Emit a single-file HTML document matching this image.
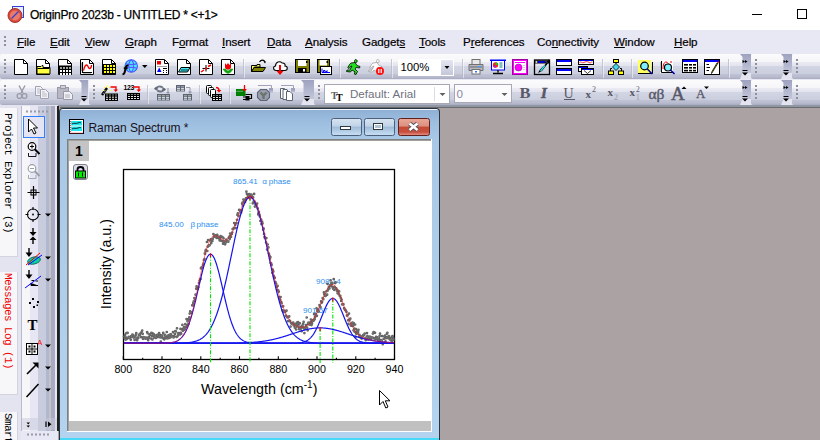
<!DOCTYPE html>
<html><head><meta charset="utf-8">
<style>
*{box-sizing:border-box}
html,body{margin:0;padding:0;width:820px;height:440px;overflow:hidden;background:#aba3a3;font-family:"Liberation Sans",sans-serif;position:relative}
.abs{position:absolute}
#title{left:0;top:0;width:820px;height:30px;background:#fff}
#title .t{left:30px;top:8px;font-size:12px;color:#000;letter-spacing:-0.25px;white-space:nowrap;-webkit-text-stroke:0.25px #000}
#menu{left:0;top:30px;width:820px;height:24px;background:#e8e7f4}
#menu span{position:absolute;top:5px;font-size:11.6px;letter-spacing:-0.1px;color:#000;white-space:nowrap;-webkit-text-stroke:0.2px #000}
#menu u{text-decoration:underline;text-decoration-thickness:1px;text-underline-offset:0.5px}
#tbarea{left:0;top:54px;width:820px;height:53px;background:#e8e7f4}
.tb{position:absolute;border-radius:2px;background:linear-gradient(#fbfbfc 0,#f6f6f9 7.5px,#eaeaf3 8.5px,#e4e4ef 11.5px,#d2d5e3 12.5px,#cbcedd 19.5px,#bfc2d4 20.5px,#b8bbce 23px,#a8abbf 25px)}
.chev{position:absolute;border-radius:3px 3px 3px 3px;background:linear-gradient(#9da2be 0,#a8acc6 3px,#b4b8cf 9px,#c4c7d9 15px,#d6d8e6 19px,#e6e7f1 23px,#dcdde8 25px)}
.grip{position:absolute;width:2px;background:repeating-linear-gradient(#8e8e9c 0 2px,transparent 2px 4px)}
#mdiline{left:58px;top:105px;width:762px;height:3px;background:linear-gradient(#8f97a2 0,#8f97a2 2px,#6c6c70 2px)}
.vt{transform-origin:0 0;transform:rotate(90deg);font-family:"Liberation Mono",monospace;font-size:11px;letter-spacing:-0.6px;white-space:nowrap;line-height:11px}
.tl{top:363px;width:30px;text-align:center;font-size:10.7px;color:#000;line-height:12px}
.pl{font-size:8.1px;color:#2d8ff0;white-space:nowrap;line-height:10px}
</style></head><body>

<div id="title" class="abs">
 <svg class="abs" style="left:6px;top:5px" width="20" height="20" viewBox="0 0 20 20">
  <rect x="6.5" y="1.5" width="11" height="11" fill="#e8eeff" stroke="#3340d0" stroke-width="1"/>
  <circle cx="9" cy="10.5" r="7" fill="#d84a3c" stroke="#a8342a" stroke-width="1"/>
  <circle cx="9" cy="10.5" r="5" fill="#ea7a6a"/>
  <path d="M5.5 13.5 L12.5 6.5" stroke="#3340d0" stroke-width="1.2"/>
 </svg>
 <div class="abs t">OriginPro 2023b - UNTITLED * &lt;+1&gt;</div>
 <div class="abs" style="left:752px;top:14px;width:10px;height:1px;background:#000"></div>
 <div class="abs" style="left:797px;top:9px;width:10px;height:10px;border:1px solid #000"></div>
</div>
<div id="menu" class="abs">
<div class="abs grip" style="left:4px;top:6px;height:12px"></div>
<span style="left:17px"><u>F</u>ile</span>
<span style="left:50px"><u>E</u>dit</span>
<span style="left:85px"><u>V</u>iew</span>
<span style="left:125px"><u>G</u>raph</span>
<span style="left:172px">F<u>o</u>rmat</span>
<span style="left:222px"><u>I</u>nsert</span>
<span style="left:267px"><u>D</u>ata</span>
<span style="left:305px"><u>A</u>nalysis</span>
<span style="left:362px">Gadget<u>s</u></span>
<span style="left:419px"><u>T</u>ools</span>
<span style="left:463px">P<u>r</u>eferences</span>
<span style="left:537px">Co<u>n</u>nectivity</span>
<span style="left:614px"><u>W</u>indow</span>
<span style="left:674px"><u>H</u>elp</span>
</div>
<div id="tbarea" class="abs"></div>
<div class="tb" style="left:0px;top:54px;width:751px;height:25px"></div><div class="abs grip" style="left:4px;top:59px;height:15px"></div><svg class="abs" style="left:739px;top:54px" width="14" height="25" viewBox="739 54 14 25"><defs><linearGradient id="cv74054" x1="0" y1="0" x2="0" y2="1"><stop offset="0" stop-color="#9ea2c0"/><stop offset="0.5" stop-color="#b0b4cc"/><stop offset="1" stop-color="#c4c7da"/></linearGradient></defs><path d="M740 54H751V73H742.5V57Z" fill="url(#cv74054)"/><path d="M742.5 73H751L752.5 79H740Z" fill="#e4e4f0"/></svg>
<div class="tb" style="left:751px;top:54px;width:41px;height:25px"></div><div class="abs grip" style="left:755px;top:59px;height:15px"></div><svg class="abs" style="left:780px;top:54px" width="14" height="25" viewBox="780 54 14 25"><defs><linearGradient id="cv78154" x1="0" y1="0" x2="0" y2="1"><stop offset="0" stop-color="#9ea2c0"/><stop offset="0.5" stop-color="#b0b4cc"/><stop offset="1" stop-color="#c4c7da"/></linearGradient></defs><path d="M781 54H792V73H783.5V57Z" fill="url(#cv78154)"/><path d="M783.5 73H792L793.5 79H781Z" fill="#e4e4f0"/></svg>
<div class="tb" style="left:792px;top:54px;width:38px;height:25px"></div><div class="abs grip" style="left:796px;top:59px;height:15px"></div>
<div class="tb" style="left:0px;top:80px;width:88px;height:25px"></div><div class="abs grip" style="left:4px;top:85px;height:15px"></div><svg class="abs" style="left:78px;top:80px" width="12" height="25" viewBox="78 80 12 25"><defs><linearGradient id="cv7980" x1="0" y1="0" x2="0" y2="1"><stop offset="0" stop-color="#9ea2c0"/><stop offset="0.5" stop-color="#b0b4cc"/><stop offset="1" stop-color="#c4c7da"/></linearGradient></defs><path d="M79 80H88V99H81.5V83Z" fill="url(#cv7980)"/><path d="M81.5 99H88L89.5 105H79Z" fill="#e4e4f0"/></svg>
<div class="tb" style="left:89px;top:80px;width:225px;height:25px"></div><div class="abs grip" style="left:93px;top:85px;height:15px"></div><svg class="abs" style="left:300px;top:80px" width="16" height="25" viewBox="300 80 16 25"><defs><linearGradient id="cv30180" x1="0" y1="0" x2="0" y2="1"><stop offset="0" stop-color="#9ea2c0"/><stop offset="0.5" stop-color="#b0b4cc"/><stop offset="1" stop-color="#c4c7da"/></linearGradient></defs><path d="M301 80H314V99H303.5V83Z" fill="url(#cv30180)"/><path d="M303.5 99H314L315.5 105H301Z" fill="#e4e4f0"/></svg>
<div class="tb" style="left:314px;top:80px;width:437px;height:25px"></div><div class="abs grip" style="left:318px;top:85px;height:15px"></div><svg class="abs" style="left:739px;top:80px" width="14" height="25" viewBox="739 80 14 25"><defs><linearGradient id="cv74080" x1="0" y1="0" x2="0" y2="1"><stop offset="0" stop-color="#9ea2c0"/><stop offset="0.5" stop-color="#b0b4cc"/><stop offset="1" stop-color="#c4c7da"/></linearGradient></defs><path d="M740 80H751V99H742.5V83Z" fill="url(#cv74080)"/><path d="M742.5 99H751L752.5 105H740Z" fill="#e4e4f0"/></svg>
<div class="tb" style="left:751px;top:80px;width:41px;height:25px"></div><div class="abs grip" style="left:755px;top:85px;height:15px"></div><svg class="abs" style="left:780px;top:80px" width="14" height="25" viewBox="780 80 14 25"><defs><linearGradient id="cv78180" x1="0" y1="0" x2="0" y2="1"><stop offset="0" stop-color="#9ea2c0"/><stop offset="0.5" stop-color="#b0b4cc"/><stop offset="1" stop-color="#c4c7da"/></linearGradient></defs><path d="M781 80H792V99H783.5V83Z" fill="url(#cv78180)"/><path d="M783.5 99H792L793.5 105H781Z" fill="#e4e4f0"/></svg>
<div class="tb" style="left:792px;top:80px;width:38px;height:25px"></div><div class="abs grip" style="left:796px;top:85px;height:15px"></div>
<div id="mdiline" class="abs"></div>
<!-- left panels -->
<div class="abs" style="left:0;top:105px;width:58px;height:335px;background:#e4e4f0"></div>
<div class="abs" style="left:0;top:108px;width:18px;height:149px;background:#f7f7fa;border-right:1px solid #d4d4de;border-bottom:1px solid #d4d4de"></div>
<div class="abs" style="left:0;top:272px;width:18px;height:123px;background:#f7f7fa;border-right:1px solid #d4d4de;border-bottom:1px solid #d4d4de"></div>
<div class="abs" style="left:0;top:412px;width:18px;height:28px;background:#f7f7fa;border-right:1px solid #d4d4de"></div>
<div class="abs vt" style="left:13px;top:113px;color:#000">Project Explorer (3)</div>
<div class="abs vt" style="left:13px;top:273px;color:#f00000">Messages Log (1)</div>
<div class="abs vt" style="left:13px;top:413px;color:#000">Smart</div>
<!-- left toolbar -->
<div class="abs" style="left:21px;top:106px;width:39px;height:325px;background:linear-gradient(90deg,#b8b8d0 0,#b8b8d0 1px,#f6f6f8 1px,#f6f6f8 9px,#e6e6f4 9px,#e6e6f4 17px,#c8ccdc 17px,#c8ccdc 25px,#b0b8d0 25px,#b0b8d0 28px,#c4c4c8 28px,#c4c4c8 30px,#aaaac4 30px,#aaaac4 34.5px,#e8e8f0 34.5px,#e8e8f0 36.5px,#202020 36.5px,#202020 38.5px,#aba3a3 38.5px)"></div>
<div class="abs" style="left:21px;top:431px;width:37px;height:9px;background:#e8e7f4"></div>
<!-- graph window -->
<div class="abs" style="left:59px;top:108px;width:381px;height:336px;border-radius:4px 4px 0 0;background:#2a3440"></div>
<div class="abs" style="left:60px;top:109px;width:379px;height:335px;border-radius:3px 3px 0 0;background:linear-gradient(#f4f8fc 0,#f4f8fc 1px,#8fb1d5 1px,#9ebfe0 14px,#a8c8e6 30px,#b0cfea 60%,#b4d3ee 100%)"></div>
<div class="abs" style="left:60px;top:438px;width:379px;height:2px;background:#48d8f8"></div>
<div class="abs" style="left:67px;top:139px;width:365px;height:293px;background:#808080"></div><div class="abs" style="left:68px;top:140px;width:364px;height:292px;background:#a0a0a0"></div>
<div class="abs" style="left:69px;top:141px;width:363px;height:291px;background:#fff"></div>
<div class="abs" style="left:69px;top:421px;width:362px;height:10px;background:#c0c0c0"></div>
<div class="abs" style="left:67px;top:431px;width:365px;height:1px;background:#fff"></div>
<div class="abs" style="left:431px;top:139px;width:1px;height:293px;background:#fff"></div>
<div class="abs" style="left:69px;top:141px;width:20px;height:20px;background:#c4c4c4;font-size:14px;font-weight:bold;text-align:center;line-height:21px;color:#000">1</div>
<div class="abs" style="left:88.5px;top:121px;font-size:12px;letter-spacing:-0.1px;color:#1a1020;white-space:nowrap">Raman Spectrum *</div>
<svg class="abs" style="left:0;top:0" width="820" height="440" viewBox="0 0 820 440">
 <defs>
  <linearGradient id="bg1" x1="0" y1="0" x2="0" y2="1"><stop offset="0" stop-color="#d8e4f0"/><stop offset="0.45" stop-color="#c0d4e8"/><stop offset="0.5" stop-color="#9fbcd8"/><stop offset="1" stop-color="#c8e0f4"/></linearGradient>
  <linearGradient id="bg2" x1="0" y1="0" x2="0" y2="1"><stop offset="0" stop-color="#eaa898"/><stop offset="0.45" stop-color="#dc9080"/><stop offset="0.5" stop-color="#c44a34"/><stop offset="0.8" stop-color="#c85040"/><stop offset="1" stop-color="#e89888"/></linearGradient>
 </defs>
 <rect x="69.5" y="119.5" width="14" height="14" fill="#fff" stroke="#000"/>
 <rect x="71" y="121" width="11" height="4.5" fill="#20e8f0"/><rect x="71" y="126.5" width="11" height="4.5" fill="#20e8f0"/>
 <path d="M72 124C74 122.5 76 124 78 123S80 123 81 122.5M72 129C74 127.5 76 129 78 128S80 128 81 127.5" stroke="#000" stroke-width="0.8" fill="none"/>
 <path d="M70.5 121V133M70.5 133H83" stroke="#f04040" stroke-dasharray="1,1" stroke-width="1"/>
 <rect x="331.5" y="118.5" width="30" height="17" rx="2" fill="url(#bg1)" stroke="#4c607c"/>
 <rect x="364.5" y="118.5" width="30" height="17" rx="2" fill="url(#bg1)" stroke="#4c607c"/>
 <rect x="398.5" y="118.5" width="31" height="17" rx="2" fill="url(#bg2)" stroke="#602020"/>
 <rect x="340.5" y="126.5" width="10" height="3" fill="#fff" stroke="#303840"/>
 <rect x="373.5" y="123.5" width="9" height="6" fill="#fff" stroke="#303840"/><rect x="375" y="125" width="6" height="3" fill="#b0c4d8"/>
 <path d="M409.5 123.5L417.5 130M417.5 123.5L409.5 130" stroke="#505058" stroke-width="4.2"/>
 <path d="M409.5 123.5L417.5 130M417.5 123.5L409.5 130" stroke="#fff" stroke-width="2.6"/>
 <rect x="73.5" y="164.5" width="14" height="15" rx="2.5" fill="#dcdcec" stroke="#808088"/>
 <path d="M77.5 171.5V169.5C77.5 167.7 78.5 167 80.5 167S83.5 167.7 83.5 169.5V171.5" fill="none" stroke="#000" stroke-width="1.8"/>
 <rect x="75.5" y="171" width="10" height="7" fill="#00f000" stroke="#000"/>
 <path d="M78.5 172.5V176.5M82.5 172.5V176.5" stroke="#000" stroke-width="1"/>
</svg>

<svg class="abs" style="left:0;top:0" width="820" height="440" viewBox="0 0 820 440">
<rect x="123.5" y="169.5" width="271" height="190" fill="none" stroke="#000" stroke-width="1.3"/>
<path d="M123.3 359.5 V356.3 M142.7 359.5 V357.7 M162.0 359.5 V356.3 M181.4 359.5 V357.7 M200.8 359.5 V356.3 M220.2 359.5 V357.7 M239.5 359.5 V356.3 M258.9 359.5 V357.7 M278.3 359.5 V356.3 M297.6 359.5 V357.7 M317.0 359.5 V356.3 M336.4 359.5 V357.7 M355.8 359.5 V356.3 M375.1 359.5 V357.7 M394.5 359.5 V356.3" stroke="#000" stroke-width="1.1"/>
</svg>
<div class="abs tl" style="left:108.3px">800</div>
<div class="abs tl" style="left:147.0px">820</div>
<div class="abs tl" style="left:185.8px">840</div>
<div class="abs tl" style="left:224.5px">860</div>
<div class="abs tl" style="left:263.3px">880</div>
<div class="abs tl" style="left:302.0px">900</div>
<div class="abs tl" style="left:340.8px">920</div>
<div class="abs tl" style="left:379.5px">940</div>
<div class="abs" style="left:201px;top:380.5px;font-size:14.3px;white-space:nowrap;color:#000">Wavelength (cm<sup style="font-size:10px;vertical-align:0;position:relative;top:-5.5px">-1</sup>)</div>
<div class="abs" style="left:98.5px;top:308.5px;transform-origin:0 0;transform:rotate(-90deg);font-size:14.2px;white-space:nowrap;color:#000;line-height:15px">Intensity (a.u.)</div>
<div class="abs pl" style="left:233px;top:177px">865.41 &nbsp;&alpha;<span style="letter-spacing:-0.5px"> </span>phase</div>
<div class="abs pl" style="left:159px;top:220px">845.00 &nbsp; &beta;<span style="letter-spacing:-1px"> </span>phase</div>
<div class="abs pl" style="left:316px;top:277px">908.14</div>
<div class="abs pl" style="left:303px;top:306px">901.57</div>
<svg class="abs" style="left:378px;top:389px" width="16" height="22" viewBox="0 0 16 22"><path d="M1.5 1.5 L1.5 16 L5 12.5 L7.8 19 L10 18 L7.3 11.8 L12 11.8 Z" fill="#fff" stroke="#000" stroke-width="1" stroke-linejoin="round"/></svg>
<svg class="abs" style="left:0;top:0" width="820" height="440" viewBox="0 0 820 440">
<path d="M124.0 336.6h0M124.6 338.4h0M124.9 334.9h0M125.2 336.6h0M125.7 339.6h0M126.0 337.7h0M126.4 333.1h0M126.7 339.1h0M127.1 333.0h0M127.6 332.9h0M128.1 337.8h0M128.8 336.9h0M129.2 337.7h0M129.6 337.9h0M130.2 338.3h0M130.8 339.8h0M131.2 336.1h0M131.5 336.6h0M131.9 335.8h0M132.4 334.6h0M132.9 334.9h0M133.5 337.4h0M134.1 336.9h0M134.6 339.9h0M135.2 336.5h0M135.9 334.8h0M136.3 333.2h0M136.6 338.7h0M137.1 340.2h0M137.7 337.6h0M138.3 338.1h0M138.9 335.2h0M139.4 334.3h0M140.0 335.3h0M140.7 333.1h0M141.0 337.1h0M141.6 332.0h0M142.2 330.5h0M142.7 333.8h0M143.0 338.8h0M143.4 337.1h0M143.8 337.5h0M144.4 337.7h0M144.8 337.7h0M145.5 338.7h0M146.0 337.7h0M146.7 338.4h0M147.1 332.0h0M147.5 333.2h0M148.2 340.2h0M148.6 337.1h0M149.0 337.8h0M149.5 334.7h0M149.8 335.3h0M150.2 334.1h0M150.9 338.5h0M151.5 332.9h0M152.1 335.9h0M152.4 339.5h0M153.0 333.7h0M153.7 334.2h0M154.0 337.6h0M154.5 336.9h0M154.9 336.4h0M155.3 335.6h0M155.6 336.7h0M156.0 337.9h0M156.3 337.4h0M156.9 335.0h0M157.3 335.1h0M157.8 335.2h0M158.4 336.9h0M159.1 333.2h0M159.4 336.5h0M159.8 334.9h0M160.4 337.4h0M160.8 341.7h0M161.3 336.7h0M161.6 335.3h0M162.1 335.6h0M162.8 338.2h0M163.2 332.9h0M163.7 337.8h0M164.2 339.3h0M164.8 334.8h0M165.4 337.1h0M166.1 338.2h0M166.8 332.0h0M167.4 335.9h0M167.8 338.3h0M168.1 337.3h0M168.5 335.7h0M169.1 337.8h0M169.8 334.5h0M170.5 337.3h0M170.8 334.4h0M171.2 335.5h0M171.8 336.4h0M172.4 336.2h0M173.0 332.2h0M173.6 337.4h0M174.3 336.0h0M174.9 334.0h0M175.3 331.1h0M175.9 331.4h0M176.6 337.0h0M177.0 328.3h0M177.6 336.1h0M178.0 333.4h0M178.7 333.0h0M179.3 334.3h0M180.0 334.5h0M180.5 328.9h0M180.9 332.9h0M181.2 333.7h0M181.7 329.3h0M182.4 324.9h0M183.0 330.7h0M183.4 328.3h0M183.8 329.9h0M184.3 327.1h0M184.7 329.2h0M185.3 324.2h0M185.9 327.0h0M186.5 319.1h0M187.0 325.4h0M187.5 321.3h0M188.0 320.7h0M188.4 324.2h0M188.8 319.1h0M189.3 317.3h0M189.7 313.6h0M190.2 311.3h0M190.5 312.8h0M191.1 312.7h0M191.7 312.7h0M192.2 305.3h0M192.8 305.3h0M193.3 302.9h0M193.8 301.3h0M194.4 298.1h0M194.9 299.9h0M195.6 294.7h0M196.2 288.7h0M196.6 286.3h0M197.3 286.8h0M197.6 289.2h0M198.0 287.7h0M198.4 287.3h0M199.0 282.9h0M199.6 280.5h0M200.2 279.0h0M200.6 278.9h0M200.9 268.3h0M201.6 267.3h0M202.3 268.1h0M203.0 265.0h0M203.5 263.5h0M203.9 260.2h0M204.5 259.0h0M204.8 253.4h0M205.1 253.8h0M205.5 250.9h0M205.9 249.8h0M206.6 250.9h0M206.9 242.0h0M207.3 251.0h0M207.7 246.7h0M208.1 240.1h0M208.7 245.6h0M209.1 245.3h0M209.6 245.3h0M210.2 240.5h0M210.8 239.3h0M211.2 243.2h0M211.8 239.9h0M212.4 240.9h0M212.7 238.9h0M213.4 234.0h0M213.9 236.5h0M214.6 235.5h0M215.1 236.9h0M215.5 236.8h0M215.8 236.6h0M216.2 235.1h0M216.8 238.0h0M217.2 234.8h0M217.6 236.5h0M218.0 236.7h0M218.5 237.5h0M219.1 238.4h0M219.7 240.4h0M220.1 239.2h0M220.6 236.2h0M221.2 236.7h0M221.8 241.0h0M222.5 237.2h0M223.1 243.7h0M223.6 238.3h0M223.9 241.4h0M224.3 243.8h0M224.7 242.0h0M225.1 244.3h0M225.7 242.5h0M226.3 239.7h0M226.7 241.6h0M227.2 241.0h0M227.6 241.5h0M228.3 241.7h0M228.7 237.8h0M229.4 236.6h0M229.7 239.1h0M230.1 233.6h0M230.5 236.2h0M231.0 236.8h0M231.3 234.3h0M231.8 233.9h0M232.2 232.6h0M232.6 229.1h0M233.2 228.8h0M233.8 227.9h0M234.2 223.0h0M234.7 228.1h0M235.2 225.0h0M235.8 228.0h0M236.5 223.1h0M237.0 219.8h0M237.4 214.9h0M237.9 213.3h0M238.5 215.9h0M239.1 209.9h0M239.7 210.1h0M240.3 211.2h0M240.6 210.7h0M241.1 212.6h0M241.6 210.4h0M242.1 203.7h0M242.6 202.5h0M242.9 205.6h0M243.4 199.5h0M244.0 201.8h0M244.6 200.3h0M245.0 202.1h0M245.5 200.3h0M245.9 198.4h0M246.4 191.7h0M246.9 194.0h0M247.5 197.5h0M248.0 196.0h0M248.4 195.7h0M248.8 196.1h0M249.3 194.0h0M249.6 197.8h0M250.2 196.7h0M250.8 195.3h0M251.3 194.7h0M251.8 195.6h0M252.4 197.6h0M252.8 203.3h0M253.1 197.4h0M253.6 201.5h0M254.1 193.9h0M254.5 201.7h0M254.9 206.6h0M255.4 203.9h0M256.1 205.9h0M256.4 205.7h0M257.1 203.6h0M257.7 208.4h0M258.2 214.4h0M258.5 213.1h0M258.9 211.9h0M259.4 214.6h0M259.8 216.4h0M260.4 221.0h0M261.1 219.5h0M261.4 224.1h0M262.1 221.7h0M262.5 223.4h0M263.2 229.7h0M263.7 228.6h0M264.1 234.0h0M264.5 237.1h0M264.9 238.0h0M265.5 238.3h0M266.1 242.5h0M266.4 238.1h0M267.1 249.6h0M267.7 244.5h0M268.4 247.4h0M268.9 253.5h0M269.5 255.6h0M270.0 258.6h0M270.4 257.0h0M270.7 263.0h0M271.2 263.5h0M271.6 264.9h0M272.3 272.8h0M272.7 269.7h0M273.3 271.4h0M273.7 275.8h0M274.1 277.9h0M274.8 277.7h0M275.4 282.1h0M276.1 283.5h0M276.5 286.6h0M276.8 286.9h0M277.2 289.9h0M277.6 285.9h0M278.2 290.4h0M278.7 291.7h0M279.1 297.2h0M279.6 298.9h0M280.3 300.0h0M280.6 297.0h0M281.3 302.2h0M281.6 303.2h0M282.1 306.5h0M282.6 310.4h0M283.2 306.3h0M283.5 312.1h0M284.2 310.8h0M284.7 311.1h0M285.1 312.1h0M285.8 315.7h0M286.5 310.7h0M286.9 316.7h0M287.4 317.4h0M288.0 321.1h0M288.5 317.0h0M289.2 316.4h0M289.5 320.6h0M290.1 321.2h0M290.6 326.6h0M291.1 323.0h0M291.6 323.7h0M292.2 323.7h0M292.7 324.1h0M293.2 322.7h0M293.8 325.5h0M294.1 323.8h0M294.8 327.6h0M295.3 327.5h0M295.7 323.9h0M296.1 329.5h0M296.5 325.2h0M296.9 322.7h0M297.3 326.5h0M297.7 323.9h0M298.1 322.0h0M298.4 325.5h0M299.0 329.1h0M299.4 328.2h0M299.9 323.3h0M300.3 329.2h0M300.9 326.8h0M301.3 327.9h0M301.7 331.2h0M302.4 325.6h0M302.8 327.2h0M303.2 324.1h0M303.6 321.9h0M304.1 328.4h0M304.4 333.1h0M304.7 328.9h0M305.4 327.3h0M306.0 325.2h0M306.7 317.5h0M307.1 327.7h0M307.7 330.3h0M308.1 323.7h0M308.5 322.6h0M308.9 324.3h0M309.4 324.0h0M309.8 324.6h0M310.5 322.4h0M310.9 319.6h0M311.5 325.1h0M312.0 323.6h0M312.4 321.2h0M313.1 320.2h0M313.7 320.6h0M314.1 314.2h0M314.7 319.2h0M315.0 317.2h0M315.6 315.3h0M316.0 314.2h0M316.5 308.3h0M316.9 315.8h0M317.3 310.9h0M317.9 309.7h0M318.2 311.6h0M318.8 311.4h0M319.5 305.1h0M319.8 306.4h0M320.5 307.2h0M321.1 301.4h0M321.6 302.8h0M322.1 301.8h0M322.7 298.2h0M323.3 299.2h0M323.9 292.4h0M324.3 294.2h0M324.9 295.8h0M325.2 294.3h0M325.6 296.0h0M326.0 294.5h0M326.4 291.3h0M327.1 294.7h0M327.5 283.9h0M327.8 290.5h0M328.4 288.9h0M328.9 286.9h0M329.4 288.5h0M330.0 285.4h0M330.6 280.4h0M330.9 285.9h0M331.4 283.0h0M331.9 284.4h0M332.3 282.9h0M332.7 287.4h0M333.2 288.8h0M333.7 279.0h0M334.2 289.8h0M334.6 286.9h0M335.2 283.1h0M335.6 282.4h0M336.2 288.4h0M336.9 290.7h0M337.2 289.9h0M337.6 293.2h0M338.3 290.9h0M338.7 294.2h0M339.1 291.4h0M339.8 295.9h0M340.3 295.9h0M340.8 298.1h0M341.2 300.9h0M341.6 299.6h0M342.1 304.4h0M342.5 304.4h0M343.1 304.0h0M343.5 304.3h0M344.1 308.2h0M344.6 309.2h0M345.1 309.9h0M345.6 310.2h0M345.9 311.1h0M346.5 311.8h0M346.9 315.6h0M347.6 315.2h0M348.1 320.3h0M348.5 323.9h0M349.0 313.6h0M349.4 320.3h0M349.7 319.6h0M350.3 318.7h0M350.8 325.6h0M351.4 323.4h0M351.7 325.7h0M352.3 322.9h0M352.6 322.7h0M353.2 325.7h0M353.5 330.3h0M353.9 323.4h0M354.3 328.5h0M354.8 332.0h0M355.1 324.5h0M355.5 336.9h0M356.0 329.1h0M356.3 333.8h0M357.0 331.3h0M357.5 333.5h0M358.1 332.1h0M358.5 329.8h0M359.2 336.7h0M359.5 334.9h0M360.0 337.1h0M360.5 336.2h0M361.1 336.5h0M361.7 338.6h0M362.3 336.6h0M362.7 336.6h0M363.2 335.2h0M363.7 334.9h0M364.2 335.1h0M364.7 333.5h0M365.2 338.4h0M365.7 340.2h0M366.2 337.5h0M366.6 337.5h0M367.0 333.1h0M367.4 336.2h0M367.8 337.6h0M368.2 339.6h0M368.7 339.0h0M369.1 336.9h0M369.6 336.9h0M370.3 336.9h0M370.8 337.7h0M371.2 339.1h0M371.9 337.5h0M372.6 337.5h0M372.9 333.6h0M373.6 332.0h0M374.3 338.4h0M374.7 339.4h0M375.0 332.8h0M375.4 338.2h0M376.1 336.8h0M376.5 338.7h0M377.0 337.0h0M377.7 338.7h0M378.2 340.1h0M378.6 339.7h0M379.0 338.6h0M379.6 336.1h0M380.0 333.7h0M380.6 340.5h0M381.2 340.2h0M381.6 340.4h0M382.1 336.1h0M382.8 344.2h0M383.3 342.9h0M383.8 338.8h0M384.5 336.4h0M385.0 335.6h0M385.5 341.4h0M385.9 338.2h0M386.5 337.4h0M386.9 333.7h0M387.4 332.8h0M388.0 338.1h0M388.3 338.2h0M388.7 336.2h0M389.2 336.4h0M389.8 339.2h0M390.4 339.3h0M390.7 340.3h0M391.1 338.1h0M391.5 338.6h0M392.0 341.3h0M392.4 336.2h0M392.8 336.3h0M393.4 338.3h0M393.8 339.6h0" stroke="#505050" stroke-opacity="0.9" stroke-width="2.7" stroke-linecap="round" fill="none"/>
<path d="M124.0 336.6h0M124.6 338.4h0M124.9 334.9h0M125.2 336.6h0M125.7 339.6h0M126.0 337.7h0M126.4 333.1h0M126.7 339.1h0M127.1 333.0h0M127.6 332.9h0M128.1 337.8h0M128.8 336.9h0M129.2 337.7h0M129.6 337.9h0M130.2 338.3h0M130.8 339.8h0M131.2 336.1h0M131.5 336.6h0M131.9 335.8h0M132.4 334.6h0M132.9 334.9h0M133.5 337.4h0M134.1 336.9h0M134.6 339.9h0M135.2 336.5h0M135.9 334.8h0M136.3 333.2h0M136.6 338.7h0M137.1 340.2h0M137.7 337.6h0M138.3 338.1h0M138.9 335.2h0M139.4 334.3h0M140.0 335.3h0M140.7 333.1h0M141.0 337.1h0M141.6 332.0h0M142.2 330.5h0M142.7 333.8h0M143.0 338.8h0M143.4 337.1h0M143.8 337.5h0M144.4 337.7h0M144.8 337.7h0M145.5 338.7h0M146.0 337.7h0M146.7 338.4h0M147.1 332.0h0M147.5 333.2h0M148.2 340.2h0M148.6 337.1h0M149.0 337.8h0M149.5 334.7h0M149.8 335.3h0M150.2 334.1h0M150.9 338.5h0M151.5 332.9h0M152.1 335.9h0M152.4 339.5h0M153.0 333.7h0M153.7 334.2h0M154.0 337.6h0M154.5 336.9h0M154.9 336.4h0M155.3 335.6h0M155.6 336.7h0M156.0 337.9h0M156.3 337.4h0M156.9 335.0h0M157.3 335.1h0M157.8 335.2h0M158.4 336.9h0M159.1 333.2h0M159.4 336.5h0M159.8 334.9h0M160.4 337.4h0M160.8 341.7h0M161.3 336.7h0M161.6 335.3h0M162.1 335.6h0M162.8 338.2h0M163.2 332.9h0M163.7 337.8h0M164.2 339.3h0M164.8 334.8h0M165.4 337.1h0M166.1 338.2h0M166.8 332.0h0M167.4 335.9h0M167.8 338.3h0M168.1 337.3h0M168.5 335.7h0M169.1 337.8h0M169.8 334.5h0M170.5 337.3h0M170.8 334.4h0M171.2 335.5h0M171.8 336.4h0M172.4 336.2h0M173.0 332.2h0M173.6 337.4h0M174.3 336.0h0M174.9 334.0h0M175.3 331.1h0M175.9 331.4h0M176.6 337.0h0M177.0 328.3h0M177.6 336.1h0M178.0 333.4h0M178.7 333.0h0M179.3 334.3h0M180.0 334.5h0M180.5 328.9h0M180.9 332.9h0M181.2 333.7h0M181.7 329.3h0M182.4 324.9h0M183.0 330.7h0M183.4 328.3h0M183.8 329.9h0M184.3 327.1h0M184.7 329.2h0M185.3 324.2h0M185.9 327.0h0M186.5 319.1h0M187.0 325.4h0M187.5 321.3h0M188.0 320.7h0M188.4 324.2h0M188.8 319.1h0M189.3 317.3h0M189.7 313.6h0M190.2 311.3h0M190.5 312.8h0M191.1 312.7h0M191.7 312.7h0M192.2 305.3h0M192.8 305.3h0M193.3 302.9h0M193.8 301.3h0M194.4 298.1h0M194.9 299.9h0M195.6 294.7h0M196.2 288.7h0M196.6 286.3h0M197.3 286.8h0M197.6 289.2h0M198.0 287.7h0M198.4 287.3h0M199.0 282.9h0M199.6 280.5h0M200.2 279.0h0M200.6 278.9h0M200.9 268.3h0M201.6 267.3h0M202.3 268.1h0M203.0 265.0h0M203.5 263.5h0M203.9 260.2h0M204.5 259.0h0M204.8 253.4h0M205.1 253.8h0M205.5 250.9h0M205.9 249.8h0M206.6 250.9h0M206.9 242.0h0M207.3 251.0h0M207.7 246.7h0M208.1 240.1h0M208.7 245.6h0M209.1 245.3h0M209.6 245.3h0M210.2 240.5h0M210.8 239.3h0M211.2 243.2h0M211.8 239.9h0M212.4 240.9h0M212.7 238.9h0M213.4 234.0h0M213.9 236.5h0M214.6 235.5h0M215.1 236.9h0M215.5 236.8h0M215.8 236.6h0M216.2 235.1h0M216.8 238.0h0M217.2 234.8h0M217.6 236.5h0M218.0 236.7h0M218.5 237.5h0M219.1 238.4h0M219.7 240.4h0M220.1 239.2h0M220.6 236.2h0M221.2 236.7h0M221.8 241.0h0M222.5 237.2h0M223.1 243.7h0M223.6 238.3h0M223.9 241.4h0M224.3 243.8h0M224.7 242.0h0M225.1 244.3h0M225.7 242.5h0M226.3 239.7h0M226.7 241.6h0M227.2 241.0h0M227.6 241.5h0M228.3 241.7h0M228.7 237.8h0M229.4 236.6h0M229.7 239.1h0M230.1 233.6h0M230.5 236.2h0M231.0 236.8h0M231.3 234.3h0M231.8 233.9h0M232.2 232.6h0M232.6 229.1h0M233.2 228.8h0M233.8 227.9h0M234.2 223.0h0M234.7 228.1h0M235.2 225.0h0M235.8 228.0h0M236.5 223.1h0M237.0 219.8h0M237.4 214.9h0M237.9 213.3h0M238.5 215.9h0M239.1 209.9h0M239.7 210.1h0M240.3 211.2h0M240.6 210.7h0M241.1 212.6h0M241.6 210.4h0M242.1 203.7h0M242.6 202.5h0M242.9 205.6h0M243.4 199.5h0M244.0 201.8h0M244.6 200.3h0M245.0 202.1h0M245.5 200.3h0M245.9 198.4h0M246.4 191.7h0M246.9 194.0h0M247.5 197.5h0M248.0 196.0h0M248.4 195.7h0M248.8 196.1h0M249.3 194.0h0M249.6 197.8h0M250.2 196.7h0M250.8 195.3h0M251.3 194.7h0M251.8 195.6h0M252.4 197.6h0M252.8 203.3h0M253.1 197.4h0M253.6 201.5h0M254.1 193.9h0M254.5 201.7h0M254.9 206.6h0M255.4 203.9h0M256.1 205.9h0M256.4 205.7h0M257.1 203.6h0M257.7 208.4h0M258.2 214.4h0M258.5 213.1h0M258.9 211.9h0M259.4 214.6h0M259.8 216.4h0M260.4 221.0h0M261.1 219.5h0M261.4 224.1h0M262.1 221.7h0M262.5 223.4h0M263.2 229.7h0M263.7 228.6h0M264.1 234.0h0M264.5 237.1h0M264.9 238.0h0M265.5 238.3h0M266.1 242.5h0M266.4 238.1h0M267.1 249.6h0M267.7 244.5h0M268.4 247.4h0M268.9 253.5h0M269.5 255.6h0M270.0 258.6h0M270.4 257.0h0M270.7 263.0h0M271.2 263.5h0M271.6 264.9h0M272.3 272.8h0M272.7 269.7h0M273.3 271.4h0M273.7 275.8h0M274.1 277.9h0M274.8 277.7h0M275.4 282.1h0M276.1 283.5h0M276.5 286.6h0M276.8 286.9h0M277.2 289.9h0M277.6 285.9h0M278.2 290.4h0M278.7 291.7h0M279.1 297.2h0M279.6 298.9h0M280.3 300.0h0M280.6 297.0h0M281.3 302.2h0M281.6 303.2h0M282.1 306.5h0M282.6 310.4h0M283.2 306.3h0M283.5 312.1h0M284.2 310.8h0M284.7 311.1h0M285.1 312.1h0M285.8 315.7h0M286.5 310.7h0M286.9 316.7h0M287.4 317.4h0M288.0 321.1h0M288.5 317.0h0M289.2 316.4h0M289.5 320.6h0M290.1 321.2h0M290.6 326.6h0M291.1 323.0h0M291.6 323.7h0M292.2 323.7h0M292.7 324.1h0M293.2 322.7h0M293.8 325.5h0M294.1 323.8h0M294.8 327.6h0M295.3 327.5h0M295.7 323.9h0M296.1 329.5h0M296.5 325.2h0M296.9 322.7h0M297.3 326.5h0M297.7 323.9h0M298.1 322.0h0M298.4 325.5h0M299.0 329.1h0M299.4 328.2h0M299.9 323.3h0M300.3 329.2h0M300.9 326.8h0M301.3 327.9h0M301.7 331.2h0M302.4 325.6h0M302.8 327.2h0M303.2 324.1h0M303.6 321.9h0M304.1 328.4h0M304.4 333.1h0M304.7 328.9h0M305.4 327.3h0M306.0 325.2h0M306.7 317.5h0M307.1 327.7h0M307.7 330.3h0M308.1 323.7h0M308.5 322.6h0M308.9 324.3h0M309.4 324.0h0M309.8 324.6h0M310.5 322.4h0M310.9 319.6h0M311.5 325.1h0M312.0 323.6h0M312.4 321.2h0M313.1 320.2h0M313.7 320.6h0M314.1 314.2h0M314.7 319.2h0M315.0 317.2h0M315.6 315.3h0M316.0 314.2h0M316.5 308.3h0M316.9 315.8h0M317.3 310.9h0M317.9 309.7h0M318.2 311.6h0M318.8 311.4h0M319.5 305.1h0M319.8 306.4h0M320.5 307.2h0M321.1 301.4h0M321.6 302.8h0M322.1 301.8h0M322.7 298.2h0M323.3 299.2h0M323.9 292.4h0M324.3 294.2h0M324.9 295.8h0M325.2 294.3h0M325.6 296.0h0M326.0 294.5h0M326.4 291.3h0M327.1 294.7h0M327.5 283.9h0M327.8 290.5h0M328.4 288.9h0M328.9 286.9h0M329.4 288.5h0M330.0 285.4h0M330.6 280.4h0M330.9 285.9h0M331.4 283.0h0M331.9 284.4h0M332.3 282.9h0M332.7 287.4h0M333.2 288.8h0M333.7 279.0h0M334.2 289.8h0M334.6 286.9h0M335.2 283.1h0M335.6 282.4h0M336.2 288.4h0M336.9 290.7h0M337.2 289.9h0M337.6 293.2h0M338.3 290.9h0M338.7 294.2h0M339.1 291.4h0M339.8 295.9h0M340.3 295.9h0M340.8 298.1h0M341.2 300.9h0M341.6 299.6h0M342.1 304.4h0M342.5 304.4h0M343.1 304.0h0M343.5 304.3h0M344.1 308.2h0M344.6 309.2h0M345.1 309.9h0M345.6 310.2h0M345.9 311.1h0M346.5 311.8h0M346.9 315.6h0M347.6 315.2h0M348.1 320.3h0M348.5 323.9h0M349.0 313.6h0M349.4 320.3h0M349.7 319.6h0M350.3 318.7h0M350.8 325.6h0M351.4 323.4h0M351.7 325.7h0M352.3 322.9h0M352.6 322.7h0M353.2 325.7h0M353.5 330.3h0M353.9 323.4h0M354.3 328.5h0M354.8 332.0h0M355.1 324.5h0M355.5 336.9h0M356.0 329.1h0M356.3 333.8h0M357.0 331.3h0M357.5 333.5h0M358.1 332.1h0M358.5 329.8h0M359.2 336.7h0M359.5 334.9h0M360.0 337.1h0M360.5 336.2h0M361.1 336.5h0M361.7 338.6h0M362.3 336.6h0M362.7 336.6h0M363.2 335.2h0M363.7 334.9h0M364.2 335.1h0M364.7 333.5h0M365.2 338.4h0M365.7 340.2h0M366.2 337.5h0M366.6 337.5h0M367.0 333.1h0M367.4 336.2h0M367.8 337.6h0M368.2 339.6h0M368.7 339.0h0M369.1 336.9h0M369.6 336.9h0M370.3 336.9h0M370.8 337.7h0M371.2 339.1h0M371.9 337.5h0M372.6 337.5h0M372.9 333.6h0M373.6 332.0h0M374.3 338.4h0M374.7 339.4h0M375.0 332.8h0M375.4 338.2h0M376.1 336.8h0M376.5 338.7h0M377.0 337.0h0M377.7 338.7h0M378.2 340.1h0M378.6 339.7h0M379.0 338.6h0M379.6 336.1h0M380.0 333.7h0M380.6 340.5h0M381.2 340.2h0M381.6 340.4h0M382.1 336.1h0M382.8 344.2h0M383.3 342.9h0M383.8 338.8h0M384.5 336.4h0M385.0 335.6h0M385.5 341.4h0M385.9 338.2h0M386.5 337.4h0M386.9 333.7h0M387.4 332.8h0M388.0 338.1h0M388.3 338.2h0M388.7 336.2h0M389.2 336.4h0M389.8 339.2h0M390.4 339.3h0M390.7 340.3h0M391.1 338.1h0M391.5 338.6h0M392.0 341.3h0M392.4 336.2h0M392.8 336.3h0M393.4 338.3h0M393.8 339.6h0" stroke="#8c8c8c" stroke-opacity="0.6" stroke-width="0.9" stroke-linecap="round" fill="none"/>
<path d="M124.0,343.20 L124.5,343.20 L125.0,343.20 L125.5,343.20 L126.0,343.20 L126.5,343.20 L127.0,343.20 L127.5,343.20 L128.0,343.20 L128.5,343.20 L129.0,343.20 L129.5,343.20 L130.0,343.20 L130.5,343.20 L131.0,343.20 L131.5,343.20 L132.0,343.20 L132.5,343.20 L133.0,343.20 L133.5,343.20 L134.0,343.20 L134.5,343.20 L135.0,343.20 L135.5,343.20 L136.0,343.20 L136.5,343.20 L137.0,343.20 L137.5,343.20 L138.0,343.20 L138.5,343.20 L139.0,343.20 L139.5,343.20 L140.0,343.20 L140.5,343.20 L141.0,343.20 L141.5,343.20 L142.0,343.20 L142.5,343.20 L143.0,343.20 L143.5,343.20 L144.0,343.20 L144.5,343.20 L145.0,343.20 L145.5,343.20 L146.0,343.20 L146.5,343.20 L147.0,343.20 L147.5,343.20 L148.0,343.20 L148.5,343.20 L149.0,343.20 L149.5,343.20 L150.0,343.20 L150.5,343.20 L151.0,343.20 L151.5,343.20 L152.0,343.20 L152.5,343.20 L153.0,343.20 L153.5,343.20 L154.0,343.20 L154.5,343.20 L155.0,343.20 L155.5,343.20 L156.0,343.20 L156.5,343.19 L157.0,343.19 L157.5,343.19 L158.0,343.19 L158.5,343.19 L159.0,343.19 L159.5,343.18 L160.0,343.18 L160.5,343.18 L161.0,343.17 L161.5,343.17 L162.0,343.16 L162.5,343.16 L163.0,343.15 L163.5,343.14 L164.0,343.13 L164.5,343.12 L165.0,343.10 L165.5,343.09 L166.0,343.07 L166.5,343.05 L167.0,343.03 L167.5,343.00 L168.0,342.97 L168.5,342.94 L169.0,342.90 L169.5,342.85 L170.0,342.80 L170.5,342.75 L171.0,342.68 L171.5,342.61 L172.0,342.53 L172.5,342.44 L173.0,342.34 L173.5,342.23 L174.0,342.10 L174.5,341.96 L175.0,341.81 L175.5,341.64 L176.0,341.45 L176.5,341.24 L177.0,341.01 L177.5,340.75 L178.0,340.47 L178.5,340.16 L179.0,339.83 L179.5,339.46 L180.0,339.06 L180.5,338.63 L181.0,338.16 L181.5,337.65 L182.0,337.09 L182.5,336.49 L183.0,335.85 L183.5,335.16 L184.0,334.42 L184.5,333.62 L185.0,332.77 L185.5,331.87 L186.0,330.90 L186.5,329.88 L187.0,328.79 L187.5,327.64 L188.0,326.43 L188.5,325.15 L189.0,323.81 L189.5,322.40 L190.0,320.92 L190.5,319.38 L191.0,317.78 L191.5,316.11 L192.0,314.38 L192.5,312.59 L193.0,310.75 L193.5,308.85 L194.0,306.89 L194.5,304.89 L195.0,302.85 L195.5,300.77 L196.0,298.65 L196.5,296.51 L197.0,294.34 L197.5,292.16 L198.0,289.97 L198.5,287.78 L199.0,285.59 L199.5,283.41 L200.0,281.25 L200.5,279.13 L201.0,277.03 L201.5,274.99 L202.0,272.99 L202.5,271.06 L203.0,269.19 L203.5,267.41 L204.0,265.70 L204.5,264.09 L205.0,262.58 L205.5,261.18 L206.0,259.89 L206.5,258.72 L207.0,257.67 L207.5,256.76 L208.0,255.98 L208.5,255.34 L209.0,254.83 L209.5,254.48 L210.0,254.27 L210.5,254.20 L211.0,254.28 L211.5,254.51 L212.0,254.88 L212.5,255.40 L213.0,256.06 L213.5,256.86 L214.0,257.79 L214.5,258.85 L215.0,260.03 L215.5,261.34 L216.0,262.75 L216.5,264.27 L217.0,265.89 L217.5,267.61 L218.0,269.40 L218.5,271.28 L219.0,273.22 L219.5,275.22 L220.0,277.27 L220.5,279.37 L221.0,281.50 L221.5,283.66 L222.0,285.84 L222.5,288.03 L223.0,290.22 L223.5,292.41 L224.0,294.59 L224.5,296.76 L225.0,298.90 L225.5,301.01 L226.0,303.09 L226.5,305.13 L227.0,307.12 L227.5,309.07 L228.0,310.96 L228.5,312.80 L229.0,314.58 L229.5,316.30 L230.0,317.96 L230.5,319.56 L231.0,321.09 L231.5,322.56 L232.0,323.96 L232.5,325.30 L233.0,326.57 L233.5,327.77 L234.0,328.92 L234.5,330.00 L235.0,331.01 L235.5,331.97 L236.0,332.87 L236.5,333.72 L237.0,334.50 L237.5,335.24 L238.0,335.93 L238.5,336.57 L239.0,337.16 L239.5,337.71 L240.0,338.21 L240.5,338.68 L241.0,339.11 L241.5,339.51 L242.0,339.87 L242.5,340.20 L243.0,340.50 L243.5,340.78 L244.0,341.03 L244.5,341.26 L245.0,341.47 L245.5,341.66 L246.0,341.83 L246.5,341.98 L247.0,342.12 L247.5,342.24 L248.0,342.35 L248.5,342.45 L249.0,342.54 L249.5,342.62 L250.0,342.69 L250.5,342.75 L251.0,342.81 L251.5,342.86 L252.0,342.90 L252.5,342.94 L253.0,342.97 L253.5,343.00 L254.0,343.03 L254.5,343.05 L255.0,343.07 L255.5,343.09 L256.0,343.11 L256.5,343.12 L257.0,343.13 L257.5,343.14 L258.0,343.15 L258.5,343.16 L259.0,343.16 L259.5,343.17 L260.0,343.17 L260.5,343.18 L261.0,343.18 L261.5,343.18 L262.0,343.19 L262.5,343.19 L263.0,343.19 L263.5,343.19 L264.0,343.19 L264.5,343.19 L265.0,343.20 L265.5,343.20 L266.0,343.20 L266.5,343.20 L267.0,343.20 L267.5,343.20 L268.0,343.20 L268.5,343.20 L269.0,343.20 L269.5,343.20 L270.0,343.20 L270.5,343.20 L271.0,343.20 L271.5,343.20 L272.0,343.20 L272.5,343.20 L273.0,343.20 L273.5,343.20 L274.0,343.20 L274.5,343.20 L275.0,343.20 L275.5,343.20 L276.0,343.20 L276.5,343.20 L277.0,343.20 L277.5,343.20 L278.0,343.20 L278.5,343.20 L279.0,343.20 L279.5,343.20 L280.0,343.20 L280.5,343.20 L281.0,343.20 L281.5,343.20 L282.0,343.20 L282.5,343.20 L283.0,343.20 L283.5,343.20 L284.0,343.20 L284.5,343.20 L285.0,343.20 L285.5,343.20 L286.0,343.20 L286.5,343.20 L287.0,343.20 L287.5,343.20 L288.0,343.20 L288.5,343.20 L289.0,343.20 L289.5,343.20 L290.0,343.20 L290.5,343.20 L291.0,343.20 L291.5,343.20 L292.0,343.20 L292.5,343.20 L293.0,343.20 L293.5,343.20 L294.0,343.20 L294.5,343.20 L295.0,343.20 L295.5,343.20 L296.0,343.20 L296.5,343.20 L297.0,343.20 L297.5,343.20 L298.0,343.20 L298.5,343.20 L299.0,343.20 L299.5,343.20 L300.0,343.20 L300.5,343.20 L301.0,343.20 L301.5,343.20 L302.0,343.20 L302.5,343.20 L303.0,343.20 L303.5,343.20 L304.0,343.20 L304.5,343.20 L305.0,343.20 L305.5,343.20 L306.0,343.20 L306.5,343.20 L307.0,343.20 L307.5,343.20 L308.0,343.20 L308.5,343.20 L309.0,343.20 L309.5,343.20 L310.0,343.20 L310.5,343.20 L311.0,343.20 L311.5,343.20 L312.0,343.20 L312.5,343.20 L313.0,343.20 L313.5,343.20 L314.0,343.20 L314.5,343.20 L315.0,343.20 L315.5,343.20 L316.0,343.20 L316.5,343.20 L317.0,343.20 L317.5,343.20 L318.0,343.20 L318.5,343.20 L319.0,343.20 L319.5,343.20 L320.0,343.20 L320.5,343.20 L321.0,343.20 L321.5,343.20 L322.0,343.20 L322.5,343.20 L323.0,343.20 L323.5,343.20 L324.0,343.20 L324.5,343.20 L325.0,343.20 L325.5,343.20 L326.0,343.20 L326.5,343.20 L327.0,343.20 L327.5,343.20 L328.0,343.20 L328.5,343.20 L329.0,343.20 L329.5,343.20 L330.0,343.20 L330.5,343.20 L331.0,343.20 L331.5,343.20 L332.0,343.20 L332.5,343.20 L333.0,343.20 L333.5,343.20 L334.0,343.20 L334.5,343.20 L335.0,343.20 L335.5,343.20 L336.0,343.20 L336.5,343.20 L337.0,343.20 L337.5,343.20 L338.0,343.20 L338.5,343.20 L339.0,343.20 L339.5,343.20 L340.0,343.20 L340.5,343.20 L341.0,343.20 L341.5,343.20 L342.0,343.20 L342.5,343.20 L343.0,343.20 L343.5,343.20 L344.0,343.20 L344.5,343.20 L345.0,343.20 L345.5,343.20 L346.0,343.20 L346.5,343.20 L347.0,343.20 L347.5,343.20 L348.0,343.20 L348.5,343.20 L349.0,343.20 L349.5,343.20 L350.0,343.20 L350.5,343.20 L351.0,343.20 L351.5,343.20 L352.0,343.20 L352.5,343.20 L353.0,343.20 L353.5,343.20 L354.0,343.20 L354.5,343.20 L355.0,343.20 L355.5,343.20 L356.0,343.20 L356.5,343.20 L357.0,343.20 L357.5,343.20 L358.0,343.20 L358.5,343.20 L359.0,343.20 L359.5,343.20 L360.0,343.20 L360.5,343.20 L361.0,343.20 L361.5,343.20 L362.0,343.20 L362.5,343.20 L363.0,343.20 L363.5,343.20 L364.0,343.20 L364.5,343.20 L365.0,343.20 L365.5,343.20 L366.0,343.20 L366.5,343.20 L367.0,343.20 L367.5,343.20 L368.0,343.20 L368.5,343.20 L369.0,343.20 L369.5,343.20 L370.0,343.20 L370.5,343.20 L371.0,343.20 L371.5,343.20 L372.0,343.20 L372.5,343.20 L373.0,343.20 L373.5,343.20 L374.0,343.20 L374.5,343.20 L375.0,343.20 L375.5,343.20 L376.0,343.20 L376.5,343.20 L377.0,343.20 L377.5,343.20 L378.0,343.20 L378.5,343.20 L379.0,343.20 L379.5,343.20 L380.0,343.20 L380.5,343.20 L381.0,343.20 L381.5,343.20 L382.0,343.20 L382.5,343.20 L383.0,343.20 L383.5,343.20 L384.0,343.20 L384.5,343.20 L385.0,343.20 L385.5,343.20 L386.0,343.20 L386.5,343.20 L387.0,343.20 L387.5,343.20 L388.0,343.20 L388.5,343.20 L389.0,343.20 L389.5,343.20 L390.0,343.20 L390.5,343.20 L391.0,343.20 L391.5,343.20 L392.0,343.20 L392.5,343.20 L393.0,343.20 L393.5,343.20 L394.0,343.20" fill="none" stroke="#1414ee" stroke-width="1.2"/>
<path d="M124.0,343.20 L124.5,343.20 L125.0,343.20 L125.5,343.20 L126.0,343.20 L126.5,343.20 L127.0,343.20 L127.5,343.20 L128.0,343.20 L128.5,343.20 L129.0,343.20 L129.5,343.20 L130.0,343.20 L130.5,343.20 L131.0,343.20 L131.5,343.20 L132.0,343.20 L132.5,343.20 L133.0,343.20 L133.5,343.20 L134.0,343.20 L134.5,343.20 L135.0,343.20 L135.5,343.20 L136.0,343.20 L136.5,343.20 L137.0,343.20 L137.5,343.20 L138.0,343.20 L138.5,343.20 L139.0,343.20 L139.5,343.20 L140.0,343.20 L140.5,343.20 L141.0,343.20 L141.5,343.20 L142.0,343.20 L142.5,343.20 L143.0,343.20 L143.5,343.20 L144.0,343.20 L144.5,343.20 L145.0,343.20 L145.5,343.20 L146.0,343.20 L146.5,343.20 L147.0,343.20 L147.5,343.20 L148.0,343.20 L148.5,343.20 L149.0,343.20 L149.5,343.20 L150.0,343.20 L150.5,343.20 L151.0,343.20 L151.5,343.20 L152.0,343.20 L152.5,343.20 L153.0,343.20 L153.5,343.20 L154.0,343.20 L154.5,343.20 L155.0,343.20 L155.5,343.20 L156.0,343.20 L156.5,343.20 L157.0,343.20 L157.5,343.20 L158.0,343.20 L158.5,343.20 L159.0,343.20 L159.5,343.20 L160.0,343.20 L160.5,343.20 L161.0,343.20 L161.5,343.20 L162.0,343.20 L162.5,343.20 L163.0,343.20 L163.5,343.20 L164.0,343.20 L164.5,343.20 L165.0,343.20 L165.5,343.20 L166.0,343.20 L166.5,343.19 L167.0,343.19 L167.5,343.19 L168.0,343.19 L168.5,343.19 L169.0,343.19 L169.5,343.19 L170.0,343.19 L170.5,343.19 L171.0,343.18 L171.5,343.18 L172.0,343.18 L172.5,343.18 L173.0,343.17 L173.5,343.17 L174.0,343.17 L174.5,343.16 L175.0,343.16 L175.5,343.16 L176.0,343.15 L176.5,343.15 L177.0,343.14 L177.5,343.13 L178.0,343.13 L178.5,343.12 L179.0,343.11 L179.5,343.10 L180.0,343.09 L180.5,343.07 L181.0,343.06 L181.5,343.05 L182.0,343.03 L182.5,343.01 L183.0,342.99 L183.5,342.97 L184.0,342.95 L184.5,342.92 L185.0,342.90 L185.5,342.87 L186.0,342.83 L186.5,342.80 L187.0,342.76 L187.5,342.72 L188.0,342.67 L188.5,342.62 L189.0,342.56 L189.5,342.51 L190.0,342.44 L190.5,342.37 L191.0,342.30 L191.5,342.22 L192.0,342.13 L192.5,342.04 L193.0,341.93 L193.5,341.82 L194.0,341.71 L194.5,341.58 L195.0,341.44 L195.5,341.30 L196.0,341.14 L196.5,340.97 L197.0,340.79 L197.5,340.60 L198.0,340.39 L198.5,340.17 L199.0,339.94 L199.5,339.69 L200.0,339.42 L200.5,339.13 L201.0,338.83 L201.5,338.51 L202.0,338.16 L202.5,337.80 L203.0,337.42 L203.5,337.01 L204.0,336.57 L204.5,336.11 L205.0,335.63 L205.5,335.12 L206.0,334.58 L206.5,334.01 L207.0,333.41 L207.5,332.78 L208.0,332.12 L208.5,331.42 L209.0,330.69 L209.5,329.92 L210.0,329.11 L210.5,328.27 L211.0,327.39 L211.5,326.47 L212.0,325.51 L212.5,324.51 L213.0,323.46 L213.5,322.37 L214.0,321.24 L214.5,320.06 L215.0,318.84 L215.5,317.57 L216.0,316.25 L216.5,314.89 L217.0,313.48 L217.5,312.02 L218.0,310.52 L218.5,308.97 L219.0,307.37 L219.5,305.72 L220.0,304.03 L220.5,302.28 L221.0,300.50 L221.5,298.67 L222.0,296.79 L222.5,294.87 L223.0,292.90 L223.5,290.90 L224.0,288.85 L224.5,286.77 L225.0,284.65 L225.5,282.49 L226.0,280.30 L226.5,278.08 L227.0,275.83 L227.5,273.55 L228.0,271.25 L228.5,268.93 L229.0,266.58 L229.5,264.22 L230.0,261.85 L230.5,259.47 L231.0,257.08 L231.5,254.69 L232.0,252.29 L232.5,249.91 L233.0,247.52 L233.5,245.15 L234.0,242.79 L234.5,240.46 L235.0,238.14 L235.5,235.85 L236.0,233.59 L236.5,231.37 L237.0,229.18 L237.5,227.03 L238.0,224.93 L238.5,222.88 L239.0,220.89 L239.5,218.95 L240.0,217.08 L240.5,215.27 L241.0,213.52 L241.5,211.85 L242.0,210.26 L242.5,208.74 L243.0,207.31 L243.5,205.96 L244.0,204.70 L244.5,203.53 L245.0,202.45 L245.5,201.47 L246.0,200.59 L246.5,199.80 L247.0,199.12 L247.5,198.54 L248.0,198.06 L248.5,197.68 L249.0,197.42 L249.5,197.26 L250.0,197.20 L250.5,197.25 L251.0,197.41 L251.5,197.67 L252.0,198.04 L252.5,198.52 L253.0,199.10 L253.5,199.78 L254.0,200.56 L254.5,201.44 L255.0,202.42 L255.5,203.49 L256.0,204.66 L256.5,205.92 L257.0,207.26 L257.5,208.69 L258.0,210.21 L258.5,211.80 L259.0,213.46 L259.5,215.20 L260.0,217.01 L260.5,218.89 L261.0,220.82 L261.5,222.82 L262.0,224.86 L262.5,226.96 L263.0,229.10 L263.5,231.29 L264.0,233.51 L264.5,235.77 L265.0,238.06 L265.5,240.38 L266.0,242.71 L266.5,245.07 L267.0,247.44 L267.5,249.82 L268.0,252.21 L268.5,254.61 L269.0,257.00 L269.5,259.39 L270.0,261.77 L270.5,264.14 L271.0,266.50 L271.5,268.85 L272.0,271.17 L272.5,273.47 L273.0,275.75 L273.5,278.00 L274.0,280.23 L274.5,282.42 L275.0,284.58 L275.5,286.70 L276.0,288.78 L276.5,290.83 L277.0,292.84 L277.5,294.80 L278.0,296.72 L278.5,298.60 L279.0,300.44 L279.5,302.22 L280.0,303.97 L280.5,305.66 L281.0,307.31 L281.5,308.91 L282.0,310.47 L282.5,311.97 L283.0,313.43 L283.5,314.84 L284.0,316.21 L284.5,317.52 L285.0,318.79 L285.5,320.02 L286.0,321.20 L286.5,322.33 L287.0,323.42 L287.5,324.47 L288.0,325.47 L288.5,326.44 L289.0,327.36 L289.5,328.24 L290.0,329.09 L290.5,329.89 L291.0,330.66 L291.5,331.39 L292.0,332.09 L292.5,332.76 L293.0,333.39 L293.5,333.99 L294.0,334.56 L294.5,335.10 L295.0,335.61 L295.5,336.10 L296.0,336.56 L296.5,336.99 L297.0,337.40 L297.5,337.79 L298.0,338.15 L298.5,338.50 L299.0,338.82 L299.5,339.12 L300.0,339.41 L300.5,339.68 L301.0,339.93 L301.5,340.17 L302.0,340.39 L302.5,340.59 L303.0,340.79 L303.5,340.97 L304.0,341.14 L304.5,341.29 L305.0,341.44 L305.5,341.58 L306.0,341.70 L306.5,341.82 L307.0,341.93 L307.5,342.03 L308.0,342.13 L308.5,342.21 L309.0,342.30 L309.5,342.37 L310.0,342.44 L310.5,342.50 L311.0,342.56 L311.5,342.62 L312.0,342.67 L312.5,342.71 L313.0,342.76 L313.5,342.80 L314.0,342.83 L314.5,342.86 L315.0,342.89 L315.5,342.92 L316.0,342.95 L316.5,342.97 L317.0,342.99 L317.5,343.01 L318.0,343.03 L318.5,343.05 L319.0,343.06 L319.5,343.07 L320.0,343.09 L320.5,343.10 L321.0,343.11 L321.5,343.12 L322.0,343.12 L322.5,343.13 L323.0,343.14 L323.5,343.15 L324.0,343.15 L324.5,343.16 L325.0,343.16 L325.5,343.16 L326.0,343.17 L326.5,343.17 L327.0,343.17 L327.5,343.18 L328.0,343.18 L328.5,343.18 L329.0,343.18 L329.5,343.19 L330.0,343.19 L330.5,343.19 L331.0,343.19 L331.5,343.19 L332.0,343.19 L332.5,343.19 L333.0,343.19 L333.5,343.19 L334.0,343.20 L334.5,343.20 L335.0,343.20 L335.5,343.20 L336.0,343.20 L336.5,343.20 L337.0,343.20 L337.5,343.20 L338.0,343.20 L338.5,343.20 L339.0,343.20 L339.5,343.20 L340.0,343.20 L340.5,343.20 L341.0,343.20 L341.5,343.20 L342.0,343.20 L342.5,343.20 L343.0,343.20 L343.5,343.20 L344.0,343.20 L344.5,343.20 L345.0,343.20 L345.5,343.20 L346.0,343.20 L346.5,343.20 L347.0,343.20 L347.5,343.20 L348.0,343.20 L348.5,343.20 L349.0,343.20 L349.5,343.20 L350.0,343.20 L350.5,343.20 L351.0,343.20 L351.5,343.20 L352.0,343.20 L352.5,343.20 L353.0,343.20 L353.5,343.20 L354.0,343.20 L354.5,343.20 L355.0,343.20 L355.5,343.20 L356.0,343.20 L356.5,343.20 L357.0,343.20 L357.5,343.20 L358.0,343.20 L358.5,343.20 L359.0,343.20 L359.5,343.20 L360.0,343.20 L360.5,343.20 L361.0,343.20 L361.5,343.20 L362.0,343.20 L362.5,343.20 L363.0,343.20 L363.5,343.20 L364.0,343.20 L364.5,343.20 L365.0,343.20 L365.5,343.20 L366.0,343.20 L366.5,343.20 L367.0,343.20 L367.5,343.20 L368.0,343.20 L368.5,343.20 L369.0,343.20 L369.5,343.20 L370.0,343.20 L370.5,343.20 L371.0,343.20 L371.5,343.20 L372.0,343.20 L372.5,343.20 L373.0,343.20 L373.5,343.20 L374.0,343.20 L374.5,343.20 L375.0,343.20 L375.5,343.20 L376.0,343.20 L376.5,343.20 L377.0,343.20 L377.5,343.20 L378.0,343.20 L378.5,343.20 L379.0,343.20 L379.5,343.20 L380.0,343.20 L380.5,343.20 L381.0,343.20 L381.5,343.20 L382.0,343.20 L382.5,343.20 L383.0,343.20 L383.5,343.20 L384.0,343.20 L384.5,343.20 L385.0,343.20 L385.5,343.20 L386.0,343.20 L386.5,343.20 L387.0,343.20 L387.5,343.20 L388.0,343.20 L388.5,343.20 L389.0,343.20 L389.5,343.20 L390.0,343.20 L390.5,343.20 L391.0,343.20 L391.5,343.20 L392.0,343.20 L392.5,343.20 L393.0,343.20 L393.5,343.20 L394.0,343.20" fill="none" stroke="#1414ee" stroke-width="1.2"/>
<path d="M124.0,343.20 L124.5,343.20 L125.0,343.20 L125.5,343.20 L126.0,343.20 L126.5,343.20 L127.0,343.20 L127.5,343.20 L128.0,343.20 L128.5,343.20 L129.0,343.20 L129.5,343.20 L130.0,343.20 L130.5,343.20 L131.0,343.20 L131.5,343.20 L132.0,343.20 L132.5,343.20 L133.0,343.20 L133.5,343.20 L134.0,343.20 L134.5,343.20 L135.0,343.20 L135.5,343.20 L136.0,343.20 L136.5,343.20 L137.0,343.20 L137.5,343.20 L138.0,343.20 L138.5,343.20 L139.0,343.20 L139.5,343.20 L140.0,343.20 L140.5,343.20 L141.0,343.20 L141.5,343.20 L142.0,343.20 L142.5,343.20 L143.0,343.20 L143.5,343.20 L144.0,343.20 L144.5,343.20 L145.0,343.20 L145.5,343.20 L146.0,343.20 L146.5,343.20 L147.0,343.20 L147.5,343.20 L148.0,343.20 L148.5,343.20 L149.0,343.20 L149.5,343.20 L150.0,343.20 L150.5,343.20 L151.0,343.20 L151.5,343.20 L152.0,343.20 L152.5,343.20 L153.0,343.20 L153.5,343.20 L154.0,343.20 L154.5,343.20 L155.0,343.20 L155.5,343.20 L156.0,343.20 L156.5,343.20 L157.0,343.20 L157.5,343.20 L158.0,343.20 L158.5,343.20 L159.0,343.20 L159.5,343.20 L160.0,343.20 L160.5,343.20 L161.0,343.20 L161.5,343.20 L162.0,343.20 L162.5,343.20 L163.0,343.20 L163.5,343.20 L164.0,343.20 L164.5,343.20 L165.0,343.20 L165.5,343.20 L166.0,343.20 L166.5,343.20 L167.0,343.20 L167.5,343.20 L168.0,343.20 L168.5,343.20 L169.0,343.20 L169.5,343.20 L170.0,343.20 L170.5,343.20 L171.0,343.20 L171.5,343.20 L172.0,343.20 L172.5,343.20 L173.0,343.20 L173.5,343.20 L174.0,343.20 L174.5,343.20 L175.0,343.20 L175.5,343.20 L176.0,343.20 L176.5,343.20 L177.0,343.20 L177.5,343.20 L178.0,343.20 L178.5,343.20 L179.0,343.20 L179.5,343.20 L180.0,343.20 L180.5,343.20 L181.0,343.20 L181.5,343.20 L182.0,343.20 L182.5,343.20 L183.0,343.20 L183.5,343.20 L184.0,343.20 L184.5,343.20 L185.0,343.20 L185.5,343.20 L186.0,343.20 L186.5,343.20 L187.0,343.20 L187.5,343.20 L188.0,343.20 L188.5,343.20 L189.0,343.20 L189.5,343.20 L190.0,343.20 L190.5,343.20 L191.0,343.20 L191.5,343.20 L192.0,343.20 L192.5,343.20 L193.0,343.20 L193.5,343.20 L194.0,343.20 L194.5,343.20 L195.0,343.20 L195.5,343.20 L196.0,343.20 L196.5,343.20 L197.0,343.20 L197.5,343.20 L198.0,343.20 L198.5,343.20 L199.0,343.20 L199.5,343.20 L200.0,343.20 L200.5,343.20 L201.0,343.20 L201.5,343.20 L202.0,343.20 L202.5,343.20 L203.0,343.20 L203.5,343.20 L204.0,343.20 L204.5,343.20 L205.0,343.20 L205.5,343.20 L206.0,343.20 L206.5,343.20 L207.0,343.20 L207.5,343.20 L208.0,343.19 L208.5,343.19 L209.0,343.19 L209.5,343.19 L210.0,343.19 L210.5,343.19 L211.0,343.19 L211.5,343.19 L212.0,343.19 L212.5,343.19 L213.0,343.19 L213.5,343.19 L214.0,343.19 L214.5,343.19 L215.0,343.19 L215.5,343.19 L216.0,343.18 L216.5,343.18 L217.0,343.18 L217.5,343.18 L218.0,343.18 L218.5,343.18 L219.0,343.18 L219.5,343.18 L220.0,343.17 L220.5,343.17 L221.0,343.17 L221.5,343.17 L222.0,343.17 L222.5,343.16 L223.0,343.16 L223.5,343.16 L224.0,343.16 L224.5,343.15 L225.0,343.15 L225.5,343.15 L226.0,343.15 L226.5,343.14 L227.0,343.14 L227.5,343.14 L228.0,343.13 L228.5,343.13 L229.0,343.12 L229.5,343.12 L230.0,343.11 L230.5,343.11 L231.0,343.10 L231.5,343.10 L232.0,343.09 L232.5,343.08 L233.0,343.08 L233.5,343.07 L234.0,343.06 L234.5,343.06 L235.0,343.05 L235.5,343.04 L236.0,343.03 L236.5,343.02 L237.0,343.01 L237.5,343.00 L238.0,342.99 L238.5,342.98 L239.0,342.97 L239.5,342.96 L240.0,342.94 L240.5,342.93 L241.0,342.92 L241.5,342.90 L242.0,342.89 L242.5,342.87 L243.0,342.85 L243.5,342.84 L244.0,342.82 L244.5,342.80 L245.0,342.78 L245.5,342.76 L246.0,342.74 L246.5,342.71 L247.0,342.69 L247.5,342.67 L248.0,342.64 L248.5,342.62 L249.0,342.59 L249.5,342.56 L250.0,342.53 L250.5,342.50 L251.0,342.47 L251.5,342.44 L252.0,342.40 L252.5,342.37 L253.0,342.33 L253.5,342.29 L254.0,342.25 L254.5,342.21 L255.0,342.17 L255.5,342.13 L256.0,342.08 L256.5,342.04 L257.0,341.99 L257.5,341.94 L258.0,341.89 L258.5,341.83 L259.0,341.78 L259.5,341.72 L260.0,341.67 L260.5,341.61 L261.0,341.55 L261.5,341.48 L262.0,341.42 L262.5,341.35 L263.0,341.28 L263.5,341.21 L264.0,341.14 L264.5,341.06 L265.0,340.99 L265.5,340.91 L266.0,340.83 L266.5,340.74 L267.0,340.66 L267.5,340.57 L268.0,340.48 L268.5,340.39 L269.0,340.30 L269.5,340.20 L270.0,340.10 L270.5,340.00 L271.0,339.90 L271.5,339.80 L272.0,339.69 L272.5,339.58 L273.0,339.47 L273.5,339.36 L274.0,339.24 L274.5,339.13 L275.0,339.01 L275.5,338.89 L276.0,338.76 L276.5,338.64 L277.0,338.51 L277.5,338.38 L278.0,338.25 L278.5,338.11 L279.0,337.98 L279.5,337.84 L280.0,337.70 L280.5,337.56 L281.0,337.42 L281.5,337.27 L282.0,337.12 L282.5,336.98 L283.0,336.83 L283.5,336.68 L284.0,336.52 L284.5,336.37 L285.0,336.21 L285.5,336.06 L286.0,335.90 L286.5,335.74 L287.0,335.58 L287.5,335.42 L288.0,335.26 L288.5,335.09 L289.0,334.93 L289.5,334.76 L290.0,334.60 L290.5,334.44 L291.0,334.27 L291.5,334.10 L292.0,333.94 L292.5,333.77 L293.0,333.61 L293.5,333.44 L294.0,333.28 L294.5,333.11 L295.0,332.95 L295.5,332.78 L296.0,332.62 L296.5,332.46 L297.0,332.30 L297.5,332.14 L298.0,331.98 L298.5,331.82 L299.0,331.67 L299.5,331.51 L300.0,331.36 L300.5,331.21 L301.0,331.06 L301.5,330.92 L302.0,330.77 L302.5,330.63 L303.0,330.49 L303.5,330.35 L304.0,330.22 L304.5,330.09 L305.0,329.96 L305.5,329.83 L306.0,329.71 L306.5,329.59 L307.0,329.48 L307.5,329.36 L308.0,329.25 L308.5,329.15 L309.0,329.05 L309.5,328.95 L310.0,328.86 L310.5,328.77 L311.0,328.68 L311.5,328.60 L312.0,328.52 L312.5,328.45 L313.0,328.38 L313.5,328.31 L314.0,328.25 L314.5,328.20 L315.0,328.15 L315.5,328.10 L316.0,328.06 L316.5,328.02 L317.0,327.99 L317.5,327.96 L318.0,327.94 L318.5,327.92 L319.0,327.91 L319.5,327.90 L320.0,327.90 L320.5,327.90 L321.0,327.91 L321.5,327.92 L322.0,327.94 L322.5,327.96 L323.0,327.98 L323.5,328.02 L324.0,328.05 L324.5,328.09 L325.0,328.14 L325.5,328.19 L326.0,328.24 L326.5,328.30 L327.0,328.36 L327.5,328.43 L328.0,328.50 L328.5,328.58 L329.0,328.66 L329.5,328.75 L330.0,328.84 L330.5,328.93 L331.0,329.03 L331.5,329.13 L332.0,329.23 L332.5,329.34 L333.0,329.45 L333.5,329.57 L334.0,329.68 L334.5,329.81 L335.0,329.93 L335.5,330.06 L336.0,330.19 L336.5,330.32 L337.0,330.46 L337.5,330.60 L338.0,330.74 L338.5,330.88 L339.0,331.03 L339.5,331.18 L340.0,331.33 L340.5,331.48 L341.0,331.63 L341.5,331.79 L342.0,331.95 L342.5,332.10 L343.0,332.26 L343.5,332.42 L344.0,332.59 L344.5,332.75 L345.0,332.91 L345.5,333.08 L346.0,333.24 L346.5,333.41 L347.0,333.57 L347.5,333.74 L348.0,333.90 L348.5,334.07 L349.0,334.23 L349.5,334.40 L350.0,334.56 L350.5,334.73 L351.0,334.89 L351.5,335.06 L352.0,335.22 L352.5,335.38 L353.0,335.54 L353.5,335.70 L354.0,335.86 L354.5,336.02 L355.0,336.18 L355.5,336.33 L356.0,336.49 L356.5,336.64 L357.0,336.79 L357.5,336.94 L358.0,337.09 L358.5,337.24 L359.0,337.38 L359.5,337.53 L360.0,337.67 L360.5,337.81 L361.0,337.95 L361.5,338.08 L362.0,338.22 L362.5,338.35 L363.0,338.48 L363.5,338.61 L364.0,338.73 L364.5,338.86 L365.0,338.98 L365.5,339.10 L366.0,339.22 L366.5,339.33 L367.0,339.45 L367.5,339.56 L368.0,339.67 L368.5,339.77 L369.0,339.88 L369.5,339.98 L370.0,340.08 L370.5,340.18 L371.0,340.28 L371.5,340.37 L372.0,340.46 L372.5,340.55 L373.0,340.64 L373.5,340.73 L374.0,340.81 L374.5,340.89 L375.0,340.97 L375.5,341.05 L376.0,341.12 L376.5,341.19 L377.0,341.27 L377.5,341.33 L378.0,341.40 L378.5,341.47 L379.0,341.53 L379.5,341.59 L380.0,341.65 L380.5,341.71 L381.0,341.77 L381.5,341.82 L382.0,341.88 L382.5,341.93 L383.0,341.98 L383.5,342.03 L384.0,342.07 L384.5,342.12 L385.0,342.16 L385.5,342.20 L386.0,342.24 L386.5,342.28 L387.0,342.32 L387.5,342.36 L388.0,342.39 L388.5,342.43 L389.0,342.46 L389.5,342.49 L390.0,342.52 L390.5,342.55 L391.0,342.58 L391.5,342.61 L392.0,342.64 L392.5,342.66 L393.0,342.69 L393.5,342.71 L394.0,342.73" fill="none" stroke="#1414ee" stroke-width="1.2"/>
<path d="M124.0,343.20 L124.5,343.20 L125.0,343.20 L125.5,343.20 L126.0,343.20 L126.5,343.20 L127.0,343.20 L127.5,343.20 L128.0,343.20 L128.5,343.20 L129.0,343.20 L129.5,343.20 L130.0,343.20 L130.5,343.20 L131.0,343.20 L131.5,343.20 L132.0,343.20 L132.5,343.20 L133.0,343.20 L133.5,343.20 L134.0,343.20 L134.5,343.20 L135.0,343.20 L135.5,343.20 L136.0,343.20 L136.5,343.20 L137.0,343.20 L137.5,343.20 L138.0,343.20 L138.5,343.20 L139.0,343.20 L139.5,343.20 L140.0,343.20 L140.5,343.20 L141.0,343.20 L141.5,343.20 L142.0,343.20 L142.5,343.20 L143.0,343.20 L143.5,343.20 L144.0,343.20 L144.5,343.20 L145.0,343.20 L145.5,343.20 L146.0,343.20 L146.5,343.20 L147.0,343.20 L147.5,343.20 L148.0,343.20 L148.5,343.20 L149.0,343.20 L149.5,343.20 L150.0,343.20 L150.5,343.20 L151.0,343.20 L151.5,343.20 L152.0,343.20 L152.5,343.20 L153.0,343.20 L153.5,343.20 L154.0,343.20 L154.5,343.20 L155.0,343.20 L155.5,343.20 L156.0,343.20 L156.5,343.20 L157.0,343.20 L157.5,343.20 L158.0,343.20 L158.5,343.20 L159.0,343.20 L159.5,343.20 L160.0,343.20 L160.5,343.20 L161.0,343.20 L161.5,343.20 L162.0,343.20 L162.5,343.20 L163.0,343.20 L163.5,343.20 L164.0,343.20 L164.5,343.20 L165.0,343.20 L165.5,343.20 L166.0,343.20 L166.5,343.20 L167.0,343.20 L167.5,343.20 L168.0,343.20 L168.5,343.20 L169.0,343.20 L169.5,343.20 L170.0,343.20 L170.5,343.20 L171.0,343.20 L171.5,343.20 L172.0,343.20 L172.5,343.20 L173.0,343.20 L173.5,343.20 L174.0,343.20 L174.5,343.20 L175.0,343.20 L175.5,343.20 L176.0,343.20 L176.5,343.20 L177.0,343.20 L177.5,343.20 L178.0,343.20 L178.5,343.20 L179.0,343.20 L179.5,343.20 L180.0,343.20 L180.5,343.20 L181.0,343.20 L181.5,343.20 L182.0,343.20 L182.5,343.20 L183.0,343.20 L183.5,343.20 L184.0,343.20 L184.5,343.20 L185.0,343.20 L185.5,343.20 L186.0,343.20 L186.5,343.20 L187.0,343.20 L187.5,343.20 L188.0,343.20 L188.5,343.20 L189.0,343.20 L189.5,343.20 L190.0,343.20 L190.5,343.20 L191.0,343.20 L191.5,343.20 L192.0,343.20 L192.5,343.20 L193.0,343.20 L193.5,343.20 L194.0,343.20 L194.5,343.20 L195.0,343.20 L195.5,343.20 L196.0,343.20 L196.5,343.20 L197.0,343.20 L197.5,343.20 L198.0,343.20 L198.5,343.20 L199.0,343.20 L199.5,343.20 L200.0,343.20 L200.5,343.20 L201.0,343.20 L201.5,343.20 L202.0,343.20 L202.5,343.20 L203.0,343.20 L203.5,343.20 L204.0,343.20 L204.5,343.20 L205.0,343.20 L205.5,343.20 L206.0,343.20 L206.5,343.20 L207.0,343.20 L207.5,343.20 L208.0,343.20 L208.5,343.20 L209.0,343.20 L209.5,343.20 L210.0,343.20 L210.5,343.20 L211.0,343.20 L211.5,343.20 L212.0,343.20 L212.5,343.20 L213.0,343.20 L213.5,343.20 L214.0,343.20 L214.5,343.20 L215.0,343.20 L215.5,343.20 L216.0,343.20 L216.5,343.20 L217.0,343.20 L217.5,343.20 L218.0,343.20 L218.5,343.20 L219.0,343.20 L219.5,343.20 L220.0,343.20 L220.5,343.20 L221.0,343.20 L221.5,343.20 L222.0,343.20 L222.5,343.20 L223.0,343.20 L223.5,343.20 L224.0,343.20 L224.5,343.20 L225.0,343.20 L225.5,343.20 L226.0,343.20 L226.5,343.20 L227.0,343.20 L227.5,343.20 L228.0,343.20 L228.5,343.20 L229.0,343.20 L229.5,343.20 L230.0,343.20 L230.5,343.20 L231.0,343.20 L231.5,343.20 L232.0,343.20 L232.5,343.20 L233.0,343.20 L233.5,343.20 L234.0,343.20 L234.5,343.20 L235.0,343.20 L235.5,343.20 L236.0,343.20 L236.5,343.20 L237.0,343.20 L237.5,343.20 L238.0,343.20 L238.5,343.20 L239.0,343.20 L239.5,343.20 L240.0,343.20 L240.5,343.20 L241.0,343.20 L241.5,343.20 L242.0,343.20 L242.5,343.20 L243.0,343.20 L243.5,343.20 L244.0,343.20 L244.5,343.20 L245.0,343.20 L245.5,343.20 L246.0,343.20 L246.5,343.20 L247.0,343.20 L247.5,343.20 L248.0,343.20 L248.5,343.20 L249.0,343.20 L249.5,343.20 L250.0,343.20 L250.5,343.20 L251.0,343.20 L251.5,343.20 L252.0,343.20 L252.5,343.20 L253.0,343.20 L253.5,343.20 L254.0,343.20 L254.5,343.20 L255.0,343.20 L255.5,343.20 L256.0,343.20 L256.5,343.20 L257.0,343.20 L257.5,343.20 L258.0,343.20 L258.5,343.20 L259.0,343.20 L259.5,343.20 L260.0,343.20 L260.5,343.20 L261.0,343.20 L261.5,343.20 L262.0,343.20 L262.5,343.20 L263.0,343.20 L263.5,343.20 L264.0,343.20 L264.5,343.20 L265.0,343.20 L265.5,343.20 L266.0,343.20 L266.5,343.20 L267.0,343.20 L267.5,343.20 L268.0,343.20 L268.5,343.20 L269.0,343.20 L269.5,343.20 L270.0,343.20 L270.5,343.20 L271.0,343.20 L271.5,343.20 L272.0,343.20 L272.5,343.20 L273.0,343.20 L273.5,343.20 L274.0,343.20 L274.5,343.20 L275.0,343.20 L275.5,343.20 L276.0,343.20 L276.5,343.20 L277.0,343.20 L277.5,343.20 L278.0,343.20 L278.5,343.20 L279.0,343.20 L279.5,343.20 L280.0,343.20 L280.5,343.20 L281.0,343.20 L281.5,343.20 L282.0,343.20 L282.5,343.20 L283.0,343.20 L283.5,343.20 L284.0,343.20 L284.5,343.20 L285.0,343.20 L285.5,343.20 L286.0,343.20 L286.5,343.20 L287.0,343.19 L287.5,343.19 L288.0,343.19 L288.5,343.19 L289.0,343.19 L289.5,343.19 L290.0,343.18 L290.5,343.18 L291.0,343.17 L291.5,343.17 L292.0,343.16 L292.5,343.16 L293.0,343.15 L293.5,343.14 L294.0,343.13 L294.5,343.12 L295.0,343.10 L295.5,343.08 L296.0,343.06 L296.5,343.04 L297.0,343.01 L297.5,342.98 L298.0,342.95 L298.5,342.91 L299.0,342.86 L299.5,342.81 L300.0,342.75 L300.5,342.69 L301.0,342.61 L301.5,342.52 L302.0,342.43 L302.5,342.32 L303.0,342.20 L303.5,342.07 L304.0,341.91 L304.5,341.75 L305.0,341.56 L305.5,341.36 L306.0,341.13 L306.5,340.88 L307.0,340.61 L307.5,340.31 L308.0,339.98 L308.5,339.62 L309.0,339.23 L309.5,338.81 L310.0,338.36 L310.5,337.87 L311.0,337.34 L311.5,336.77 L312.0,336.17 L312.5,335.52 L313.0,334.83 L313.5,334.10 L314.0,333.33 L314.5,332.51 L315.0,331.65 L315.5,330.75 L316.0,329.81 L316.5,328.82 L317.0,327.80 L317.5,326.74 L318.0,325.64 L318.5,324.51 L319.0,323.36 L319.5,322.17 L320.0,320.96 L320.5,319.74 L321.0,318.49 L321.5,317.24 L322.0,315.98 L322.5,314.73 L323.0,313.48 L323.5,312.24 L324.0,311.01 L324.5,309.81 L325.0,308.64 L325.5,307.51 L326.0,306.42 L326.5,305.37 L327.0,304.38 L327.5,303.45 L328.0,302.58 L328.5,301.79 L329.0,301.07 L329.5,300.42 L330.0,299.86 L330.5,299.39 L331.0,299.01 L331.5,298.71 L332.0,298.52 L332.5,298.42 L333.0,298.41 L333.5,298.50 L334.0,298.68 L334.5,298.96 L335.0,299.33 L335.5,299.80 L336.0,300.34 L336.5,300.98 L337.0,301.69 L337.5,302.48 L338.0,303.33 L338.5,304.26 L339.0,305.24 L339.5,306.28 L340.0,307.37 L340.5,308.49 L341.0,309.66 L341.5,310.86 L342.0,312.08 L342.5,313.31 L343.0,314.56 L343.5,315.82 L344.0,317.08 L344.5,318.33 L345.0,319.57 L345.5,320.80 L346.0,322.01 L346.5,323.20 L347.0,324.36 L347.5,325.50 L348.0,326.60 L348.5,327.66 L349.0,328.69 L349.5,329.68 L350.0,330.63 L350.5,331.54 L351.0,332.40 L351.5,333.22 L352.0,334.00 L352.5,334.74 L353.0,335.43 L353.5,336.08 L354.0,336.70 L354.5,337.27 L355.0,337.80 L355.5,338.30 L356.0,338.76 L356.5,339.18 L357.0,339.57 L357.5,339.94 L358.0,340.27 L358.5,340.57 L359.0,340.85 L359.5,341.10 L360.0,341.33 L360.5,341.54 L361.0,341.72 L361.5,341.89 L362.0,342.05 L362.5,342.18 L363.0,342.31 L363.5,342.42 L364.0,342.51 L364.5,342.60 L365.0,342.68 L365.5,342.74 L366.0,342.80 L366.5,342.86 L367.0,342.90 L367.5,342.94 L368.0,342.98 L368.5,343.01 L369.0,343.04 L369.5,343.06 L370.0,343.08 L370.5,343.10 L371.0,343.11 L371.5,343.13 L372.0,343.14 L372.5,343.15 L373.0,343.16 L373.5,343.16 L374.0,343.17 L374.5,343.17 L375.0,343.18 L375.5,343.18 L376.0,343.19 L376.5,343.19 L377.0,343.19 L377.5,343.19 L378.0,343.19 L378.5,343.19 L379.0,343.20 L379.5,343.20 L380.0,343.20 L380.5,343.20 L381.0,343.20 L381.5,343.20 L382.0,343.20 L382.5,343.20 L383.0,343.20 L383.5,343.20 L384.0,343.20 L384.5,343.20 L385.0,343.20 L385.5,343.20 L386.0,343.20 L386.5,343.20 L387.0,343.20 L387.5,343.20 L388.0,343.20 L388.5,343.20 L389.0,343.20 L389.5,343.20 L390.0,343.20 L390.5,343.20 L391.0,343.20 L391.5,343.20 L392.0,343.20 L392.5,343.20 L393.0,343.20 L393.5,343.20 L394.0,343.20" fill="none" stroke="#1414ee" stroke-width="1.2"/>
<path d="M124.0,343.20 L124.5,343.20 L125.0,343.20 L125.5,343.20 L126.0,343.20 L126.5,343.20 L127.0,343.20 L127.5,343.20 L128.0,343.20 L128.5,343.20 L129.0,343.20 L129.5,343.20 L130.0,343.20 L130.5,343.20 L131.0,343.20 L131.5,343.20 L132.0,343.20 L132.5,343.20 L133.0,343.20 L133.5,343.20 L134.0,343.20 L134.5,343.20 L135.0,343.20 L135.5,343.20 L136.0,343.20 L136.5,343.20 L137.0,343.20 L137.5,343.20 L138.0,343.20 L138.5,343.20 L139.0,343.20 L139.5,343.20 L140.0,343.20 L140.5,343.20 L141.0,343.20 L141.5,343.20 L142.0,343.20 L142.5,343.20 L143.0,343.20 L143.5,343.20 L144.0,343.20 L144.5,343.20 L145.0,343.20 L145.5,343.20 L146.0,343.20 L146.5,343.20 L147.0,343.20 L147.5,343.20 L148.0,343.20 L148.5,343.20 L149.0,343.20 L149.5,343.20 L150.0,343.20 L150.5,343.20 L151.0,343.20 L151.5,343.20 L152.0,343.20 L152.5,343.20 L153.0,343.20 L153.5,343.20 L154.0,343.20 L154.5,343.20 L155.0,343.20 L155.5,343.20 L156.0,343.20 L156.5,343.20 L157.0,343.20 L157.5,343.20 L158.0,343.20 L158.5,343.20 L159.0,343.20 L159.5,343.20 L160.0,343.20 L160.5,343.20 L161.0,343.20 L161.5,343.20 L162.0,343.20 L162.5,343.20 L163.0,343.20 L163.5,343.20 L164.0,343.20 L164.5,343.20 L165.0,343.20 L165.5,343.20 L166.0,343.20 L166.5,343.20 L167.0,343.20 L167.5,343.20 L168.0,343.20 L168.5,343.20 L169.0,343.20 L169.5,343.20 L170.0,343.20 L170.5,343.20 L171.0,343.20 L171.5,343.20 L172.0,343.20 L172.5,343.20 L173.0,343.20 L173.5,343.20 L174.0,343.20 L174.5,343.20 L175.0,343.20 L175.5,343.20 L176.0,343.20 L176.5,343.20 L177.0,343.20 L177.5,343.20 L178.0,343.20 L178.5,343.20 L179.0,343.20 L179.5,343.20 L180.0,343.20 L180.5,343.20 L181.0,343.20 L181.5,343.20 L182.0,343.20 L182.5,343.20 L183.0,343.20 L183.5,343.20 L184.0,343.20 L184.5,343.20 L185.0,343.20 L185.5,343.20 L186.0,343.20 L186.5,343.20 L187.0,343.20 L187.5,343.20 L188.0,343.20 L188.5,343.20 L189.0,343.20 L189.5,343.20 L190.0,343.20 L190.5,343.20 L191.0,343.20 L191.5,343.20 L192.0,343.20 L192.5,343.20 L193.0,343.20 L193.5,343.20 L194.0,343.20 L194.5,343.20 L195.0,343.20 L195.5,343.20 L196.0,343.20 L196.5,343.20 L197.0,343.20 L197.5,343.20 L198.0,343.20 L198.5,343.20 L199.0,343.20 L199.5,343.20 L200.0,343.20 L200.5,343.20 L201.0,343.20 L201.5,343.20 L202.0,343.20 L202.5,343.20 L203.0,343.20 L203.5,343.20 L204.0,343.20 L204.5,343.20 L205.0,343.20 L205.5,343.20 L206.0,343.20 L206.5,343.20 L207.0,343.20 L207.5,343.20 L208.0,343.20 L208.5,343.20 L209.0,343.20 L209.5,343.20 L210.0,343.20 L210.5,343.20 L211.0,343.20 L211.5,343.20 L212.0,343.20 L212.5,343.20 L213.0,343.20 L213.5,343.20 L214.0,343.20 L214.5,343.20 L215.0,343.20 L215.5,343.20 L216.0,343.20 L216.5,343.20 L217.0,343.20 L217.5,343.20 L218.0,343.20 L218.5,343.20 L219.0,343.20 L219.5,343.20 L220.0,343.20 L220.5,343.20 L221.0,343.20 L221.5,343.20 L222.0,343.20 L222.5,343.20 L223.0,343.20 L223.5,343.20 L224.0,343.20 L224.5,343.20 L225.0,343.20 L225.5,343.20 L226.0,343.20 L226.5,343.20 L227.0,343.20 L227.5,343.20 L228.0,343.20 L228.5,343.20 L229.0,343.20 L229.5,343.20 L230.0,343.20 L230.5,343.20 L231.0,343.20 L231.5,343.20 L232.0,343.20 L232.5,343.20 L233.0,343.20 L233.5,343.20 L234.0,343.20 L234.5,343.20 L235.0,343.20 L235.5,343.20 L236.0,343.20 L236.5,343.20 L237.0,343.20 L237.5,343.20 L238.0,343.20 L238.5,343.20 L239.0,343.20 L239.5,343.20 L240.0,343.20 L240.5,343.20 L241.0,343.20 L241.5,343.20 L242.0,343.20 L242.5,343.20 L243.0,343.20 L243.5,343.20 L244.0,343.20 L244.5,343.20 L245.0,343.20 L245.5,343.20 L246.0,343.20 L246.5,343.20 L247.0,343.20 L247.5,343.20 L248.0,343.20 L248.5,343.20 L249.0,343.20 L249.5,343.20 L250.0,343.20 L250.5,343.20 L251.0,343.20 L251.5,343.20 L252.0,343.20 L252.5,343.20 L253.0,343.20 L253.5,343.20 L254.0,343.20 L254.5,343.20 L255.0,343.20 L255.5,343.20 L256.0,343.20 L256.5,343.20 L257.0,343.20 L257.5,343.20 L258.0,343.20 L258.5,343.20 L259.0,343.20 L259.5,343.20 L260.0,343.20 L260.5,343.20 L261.0,343.20 L261.5,343.20 L262.0,343.20 L262.5,343.20 L263.0,343.20 L263.5,343.20 L264.0,343.20 L264.5,343.20 L265.0,343.20 L265.5,343.20 L266.0,343.20 L266.5,343.20 L267.0,343.20 L267.5,343.20 L268.0,343.20 L268.5,343.20 L269.0,343.20 L269.5,343.20 L270.0,343.20 L270.5,343.20 L271.0,343.20 L271.5,343.20 L272.0,343.20 L272.5,343.20 L273.0,343.20 L273.5,343.20 L274.0,343.20 L274.5,343.20 L275.0,343.20 L275.5,343.20 L276.0,343.20 L276.5,343.20 L277.0,343.20 L277.5,343.20 L278.0,343.20 L278.5,343.20 L279.0,343.20 L279.5,343.20 L280.0,343.20 L280.5,343.20 L281.0,343.20 L281.5,343.20 L282.0,343.20 L282.5,343.20 L283.0,343.20 L283.5,343.20 L284.0,343.20 L284.5,343.20 L285.0,343.20 L285.5,343.20 L286.0,343.20 L286.5,343.20 L287.0,343.20 L287.5,343.20 L288.0,343.20 L288.5,343.20 L289.0,343.20 L289.5,343.20 L290.0,343.20 L290.5,343.20 L291.0,343.20 L291.5,343.20 L292.0,343.20 L292.5,343.20 L293.0,343.20 L293.5,343.20 L294.0,343.20 L294.5,343.20 L295.0,343.20 L295.5,343.20 L296.0,343.20 L296.5,343.20 L297.0,343.20 L297.5,343.20 L298.0,343.20 L298.5,343.20 L299.0,343.20 L299.5,343.20 L300.0,343.20 L300.5,343.20 L301.0,343.20 L301.5,343.20 L302.0,343.20 L302.5,343.20 L303.0,343.20 L303.5,343.20 L304.0,343.20 L304.5,343.20 L305.0,343.20 L305.5,343.20 L306.0,343.20 L306.5,343.20 L307.0,343.20 L307.5,343.20 L308.0,343.20 L308.5,343.20 L309.0,343.20 L309.5,343.20 L310.0,343.20 L310.5,343.20 L311.0,343.20 L311.5,343.20 L312.0,343.20 L312.5,343.20 L313.0,343.20 L313.5,343.20 L314.0,343.20 L314.5,343.20 L315.0,343.20 L315.5,343.20 L316.0,343.20 L316.5,343.20 L317.0,343.20 L317.5,343.20 L318.0,343.20 L318.5,343.20 L319.0,343.20 L319.5,343.20 L320.0,343.20 L320.5,343.20 L321.0,343.20 L321.5,343.20 L322.0,343.20 L322.5,343.20 L323.0,343.20 L323.5,343.20 L324.0,343.20 L324.5,343.20 L325.0,343.20 L325.5,343.20 L326.0,343.20 L326.5,343.20 L327.0,343.20 L327.5,343.20 L328.0,343.20 L328.5,343.20 L329.0,343.20 L329.5,343.20 L330.0,343.20 L330.5,343.20 L331.0,343.20 L331.5,343.20 L332.0,343.20 L332.5,343.20 L333.0,343.20 L333.5,343.20 L334.0,343.20 L334.5,343.20 L335.0,343.20 L335.5,343.20 L336.0,343.20 L336.5,343.20 L337.0,343.20 L337.5,343.20 L338.0,343.20 L338.5,343.20 L339.0,343.20 L339.5,343.20 L340.0,343.20 L340.5,343.20 L341.0,343.20 L341.5,343.20 L342.0,343.20 L342.5,343.20 L343.0,343.20 L343.5,343.20 L344.0,343.20 L344.5,343.20 L345.0,343.20 L345.5,343.20 L346.0,343.20 L346.5,343.20 L347.0,343.20 L347.5,343.20 L348.0,343.20 L348.5,343.20 L349.0,343.20 L349.5,343.20 L350.0,343.20 L350.5,343.20 L351.0,343.20 L351.5,343.20 L352.0,343.20 L352.5,343.20 L353.0,343.20 L353.5,343.20 L354.0,343.20 L354.5,343.20 L355.0,343.20 L355.5,343.20 L356.0,343.20 L356.5,343.20 L357.0,343.20 L357.5,343.20 L358.0,343.20 L358.5,343.20 L359.0,343.20 L359.5,343.20 L360.0,343.20 L360.5,343.20 L361.0,343.20 L361.5,343.20 L362.0,343.20 L362.5,343.20 L363.0,343.20 L363.5,343.20 L364.0,343.20 L364.5,343.20 L365.0,343.20 L365.5,343.20 L366.0,343.20 L366.5,343.20 L367.0,343.20 L367.5,343.20 L368.0,343.20 L368.5,343.20 L369.0,343.20 L369.5,343.20 L370.0,343.20 L370.5,343.20 L371.0,343.20 L371.5,343.20 L372.0,343.20 L372.5,343.20 L373.0,343.20 L373.5,343.20 L374.0,343.20 L374.5,343.20 L375.0,343.20 L375.5,343.20 L376.0,343.20 L376.5,343.20 L377.0,343.20 L377.5,343.20 L378.0,343.20 L378.5,343.20 L379.0,343.20 L379.5,343.20 L380.0,343.20 L380.5,343.20 L381.0,343.20 L381.5,343.20 L382.0,343.20 L382.5,343.20 L383.0,343.20 L383.5,343.20 L384.0,343.20 L384.5,343.20 L385.0,343.20 L385.5,343.20 L386.0,343.20 L386.5,343.20 L387.0,343.20 L387.5,343.20 L388.0,343.20 L388.5,343.20 L389.0,343.20 L389.5,343.20 L390.0,343.20 L390.5,343.20 L391.0,343.20 L391.5,343.20 L392.0,343.20 L392.5,343.20 L393.0,343.20 L393.5,343.20 L394.0,343.20" fill="none" stroke="#1414ee" stroke-width="1.2"/>
<path d="M124.0,343.20 L124.5,343.20 L125.0,343.20 L125.5,343.20 L126.0,343.20 L126.5,343.20 L127.0,343.20 L127.5,343.20 L128.0,343.20 L128.5,343.20 L129.0,343.20 L129.5,343.20 L130.0,343.20 L130.5,343.20 L131.0,343.20 L131.5,343.20 L132.0,343.20 L132.5,343.20 L133.0,343.20 L133.5,343.20 L134.0,343.20 L134.5,343.20 L135.0,343.20 L135.5,343.20 L136.0,343.20 L136.5,343.20 L137.0,343.20 L137.5,343.20 L138.0,343.20 L138.5,343.20 L139.0,343.20 L139.5,343.20 L140.0,343.20 L140.5,343.20 L141.0,343.20 L141.5,343.20 L142.0,343.20 L142.5,343.20 L143.0,343.20 L143.5,343.20 L144.0,343.20 L144.5,343.20 L145.0,343.20 L145.5,343.20 L146.0,343.20 L146.5,343.20 L147.0,343.20 L147.5,343.20 L148.0,343.20 L148.5,343.20 L149.0,343.20 L149.5,343.20 L150.0,343.20 L150.5,343.20 L151.0,343.20 L151.5,343.20 L152.0,343.20 L152.5,343.20 L153.0,343.20 L153.5,343.20 L154.0,343.20 L154.5,343.20 L155.0,343.20 L155.5,343.20 L156.0,343.19 L156.5,343.19 L157.0,343.19 L157.5,343.19 L158.0,343.19 L158.5,343.19 L159.0,343.19 L159.5,343.18 L160.0,343.18 L160.5,343.18 L161.0,343.17 L161.5,343.17 L162.0,343.16 L162.5,343.15 L163.0,343.15 L163.5,343.14 L164.0,343.13 L164.5,343.11 L165.0,343.10 L165.5,343.08 L166.0,343.07 L166.5,343.05 L167.0,343.02 L167.5,342.99 L168.0,342.96 L168.5,342.93 L169.0,342.89 L169.5,342.84 L170.0,342.79 L170.5,342.73 L171.0,342.67 L171.5,342.59 L172.0,342.51 L172.5,342.42 L173.0,342.32 L173.5,342.20 L174.0,342.07 L174.5,341.93 L175.0,341.77 L175.5,341.59 L176.0,341.40 L176.5,341.18 L177.0,340.94 L177.5,340.68 L178.0,340.40 L178.5,340.08 L179.0,339.74 L179.5,339.36 L180.0,338.95 L180.5,338.50 L181.0,338.02 L181.5,337.49 L182.0,336.92 L182.5,336.31 L183.0,335.64 L183.5,334.93 L184.0,334.17 L184.5,333.35 L185.0,332.47 L185.5,331.53 L186.0,330.53 L186.5,329.47 L187.0,328.35 L187.5,327.16 L188.0,325.90 L188.5,324.57 L189.0,323.17 L189.5,321.70 L190.0,320.16 L190.5,318.55 L191.0,316.88 L191.5,315.13 L192.0,313.31 L192.5,311.43 L193.0,309.48 L193.5,307.47 L194.0,305.40 L194.5,303.27 L195.0,301.09 L195.5,298.87 L196.0,296.59 L196.5,294.28 L197.0,291.94 L197.5,289.56 L198.0,287.16 L198.5,284.75 L199.0,282.32 L199.5,279.90 L200.0,277.47 L200.5,275.06 L201.0,272.66 L201.5,270.29 L202.0,267.95 L202.5,265.66 L203.0,263.41 L203.5,261.21 L204.0,259.07 L204.5,257.01 L205.0,255.01 L205.5,253.10 L206.0,251.27 L206.5,249.53 L207.0,247.88 L207.5,246.33 L208.0,244.89 L208.5,243.55 L209.0,242.32 L209.5,241.19 L210.0,240.17 L210.5,239.27 L211.0,238.47 L211.5,237.77 L212.0,237.18 L212.5,236.70 L213.0,236.31 L213.5,236.02 L214.0,235.81 L214.5,235.69 L215.0,235.65 L215.5,235.69 L216.0,235.79 L216.5,235.95 L217.0,236.16 L217.5,236.41 L218.0,236.70 L218.5,237.02 L219.0,237.36 L219.5,237.71 L220.0,238.07 L220.5,238.43 L221.0,238.77 L221.5,239.09 L222.0,239.39 L222.5,239.66 L223.0,239.89 L223.5,240.07 L224.0,240.20 L224.5,240.28 L225.0,240.30 L225.5,240.25 L226.0,240.13 L226.5,239.95 L227.0,239.69 L227.5,239.35 L228.0,238.94 L228.5,238.45 L229.0,237.89 L229.5,237.25 L230.0,236.53 L230.5,235.74 L231.0,234.88 L231.5,233.94 L232.0,232.95 L232.5,231.89 L233.0,230.77 L233.5,229.60 L234.0,228.38 L234.5,227.11 L235.0,225.80 L235.5,224.46 L236.0,223.09 L236.5,221.70 L237.0,220.30 L237.5,218.88 L238.0,217.45 L238.5,216.03 L239.0,214.62 L239.5,213.21 L240.0,211.83 L240.5,210.47 L241.0,209.15 L241.5,207.86 L242.0,206.61 L242.5,205.41 L243.0,204.27 L243.5,203.18 L244.0,202.15 L244.5,201.19 L245.0,200.30 L245.5,199.49 L246.0,198.75 L246.5,198.10 L247.0,197.53 L247.5,197.05 L248.0,196.65 L248.5,196.35 L249.0,196.15 L249.5,196.04 L250.0,196.02 L250.5,196.11 L251.0,196.29 L251.5,196.57 L252.0,196.95 L252.5,197.43 L253.0,198.00 L253.5,198.67 L254.0,199.44 L254.5,200.31 L255.0,201.26 L255.5,202.31 L256.0,203.45 L256.5,204.67 L257.0,205.98 L257.5,207.37 L258.0,208.84 L258.5,210.39 L259.0,212.01 L259.5,213.70 L260.0,215.45 L260.5,217.27 L261.0,219.15 L261.5,221.08 L262.0,223.07 L262.5,225.10 L263.0,227.18 L263.5,229.29 L264.0,231.45 L264.5,233.63 L265.0,235.84 L265.5,238.08 L266.0,240.34 L266.5,242.61 L267.0,244.90 L267.5,247.19 L268.0,249.49 L268.5,251.80 L269.0,254.10 L269.5,256.39 L270.0,258.67 L270.5,260.95 L271.0,263.21 L271.5,265.44 L272.0,267.66 L272.5,269.86 L273.0,272.02 L273.5,274.16 L274.0,276.27 L274.5,278.34 L275.0,280.38 L275.5,282.38 L276.0,284.35 L276.5,286.27 L277.0,288.15 L277.5,289.98 L278.0,291.77 L278.5,293.52 L279.0,295.21 L279.5,296.86 L280.0,298.47 L280.5,300.02 L281.0,301.53 L281.5,302.98 L282.0,304.39 L282.5,305.75 L283.0,307.06 L283.5,308.32 L284.0,309.53 L284.5,310.69 L285.0,311.80 L285.5,312.87 L286.0,313.89 L286.5,314.87 L287.0,315.80 L287.5,316.68 L288.0,317.52 L288.5,318.32 L289.0,319.08 L289.5,319.79 L290.0,320.47 L290.5,321.11 L291.0,321.71 L291.5,322.27 L292.0,322.80 L292.5,323.29 L293.0,323.75 L293.5,324.17 L294.0,324.57 L294.5,324.93 L295.0,325.26 L295.5,325.57 L296.0,325.84 L296.5,326.09 L297.0,326.32 L297.5,326.51 L298.0,326.68 L298.5,326.83 L299.0,326.95 L299.5,327.05 L300.0,327.12 L300.5,327.17 L301.0,327.20 L301.5,327.21 L302.0,327.19 L302.5,327.14 L303.0,327.08 L303.5,326.99 L304.0,326.87 L304.5,326.73 L305.0,326.56 L305.5,326.37 L306.0,326.14 L306.5,325.89 L307.0,325.61 L307.5,325.30 L308.0,324.96 L308.5,324.59 L309.0,324.18 L309.5,323.73 L310.0,323.25 L310.5,322.74 L311.0,322.18 L311.5,321.59 L312.0,320.95 L312.5,320.28 L313.0,319.57 L313.5,318.81 L314.0,318.01 L314.5,317.17 L315.0,316.29 L315.5,315.37 L316.0,314.41 L316.5,313.42 L317.0,312.38 L317.5,311.31 L318.0,310.21 L318.5,309.08 L319.0,307.93 L319.5,306.75 L320.0,305.55 L320.5,304.33 L321.0,303.11 L321.5,301.88 L322.0,300.65 L322.5,299.42 L323.0,298.20 L323.5,297.00 L324.0,295.82 L324.5,294.66 L325.0,293.54 L325.5,292.46 L326.0,291.43 L326.5,290.45 L327.0,289.52 L327.5,288.66 L328.0,287.87 L328.5,287.15 L329.0,286.51 L329.5,285.95 L330.0,285.49 L330.5,285.11 L331.0,284.82 L331.5,284.63 L332.0,284.54 L332.5,284.55 L333.0,284.65 L333.5,284.86 L334.0,285.16 L334.5,285.56 L335.0,286.06 L335.5,286.65 L336.0,287.33 L336.5,288.10 L337.0,288.95 L337.5,289.87 L338.0,290.87 L338.5,291.94 L339.0,293.07 L339.5,294.26 L340.0,295.49 L340.5,296.77 L341.0,298.09 L341.5,299.44 L342.0,300.82 L342.5,302.22 L343.0,303.63 L343.5,305.04 L344.0,306.46 L344.5,307.88 L345.0,309.28 L345.5,310.68 L346.0,312.05 L346.5,313.41 L347.0,314.74 L347.5,316.03 L348.0,317.30 L348.5,318.53 L349.0,319.72 L349.5,320.88 L350.0,321.99 L350.5,323.06 L351.0,324.09 L351.5,325.08 L352.0,326.02 L352.5,326.92 L353.0,327.77 L353.5,328.59 L354.0,329.36 L354.5,330.09 L355.0,330.78 L355.5,331.43 L356.0,332.04 L356.5,332.62 L357.0,333.17 L357.5,333.68 L358.0,334.16 L358.5,334.61 L359.0,335.03 L359.5,335.43 L360.0,335.80 L360.5,336.15 L361.0,336.47 L361.5,336.78 L362.0,337.06 L362.5,337.33 L363.0,337.59 L363.5,337.82 L364.0,338.05 L364.5,338.26 L365.0,338.46 L365.5,338.65 L366.0,338.82 L366.5,338.99 L367.0,339.15 L367.5,339.30 L368.0,339.45 L368.5,339.59 L369.0,339.72 L369.5,339.84 L370.0,339.96 L370.5,340.08 L371.0,340.19 L371.5,340.30 L372.0,340.40 L372.5,340.50 L373.0,340.60 L373.5,340.69 L374.0,340.78 L374.5,340.86 L375.0,340.95 L375.5,341.03 L376.0,341.11 L376.5,341.18 L377.0,341.26 L377.5,341.33 L378.0,341.40 L378.5,341.46 L379.0,341.53 L379.5,341.59 L380.0,341.65 L380.5,341.71 L381.0,341.77 L381.5,341.82 L382.0,341.87 L382.5,341.93 L383.0,341.98 L383.5,342.02 L384.0,342.07 L384.5,342.12 L385.0,342.16 L385.5,342.20 L386.0,342.24 L386.5,342.28 L387.0,342.32 L387.5,342.36 L388.0,342.39 L388.5,342.43 L389.0,342.46 L389.5,342.49 L390.0,342.52 L390.5,342.55 L391.0,342.58 L391.5,342.61 L392.0,342.64 L392.5,342.66 L393.0,342.69 L393.5,342.71 L394.0,342.73" fill="none" stroke="#ff1010" stroke-width="1" stroke-opacity="0.62"/>
<line x1="210.5" y1="254.2" x2="210.5" y2="363" stroke="#00e800" stroke-width="1.1" stroke-dasharray="4,1.5,1,1.5"/>
<line x1="210.5" y1="253.2" x2="210.5" y2="257.2" stroke="#ff0000" stroke-width="1.2"/>
<line x1="250.0" y1="197.2" x2="250.0" y2="363" stroke="#00e800" stroke-width="1.1" stroke-dasharray="4,1.5,1,1.5"/>
<line x1="250.0" y1="196.2" x2="250.0" y2="200.2" stroke="#ff0000" stroke-width="1.2"/>
<line x1="320.1" y1="327.9" x2="320.1" y2="363" stroke="#00e800" stroke-width="1.1" stroke-dasharray="4,1.5,1,1.5"/>
<line x1="320.1" y1="326.9" x2="320.1" y2="330.9" stroke="#ff0000" stroke-width="1.2"/>
<line x1="332.8" y1="298.4" x2="332.8" y2="363" stroke="#00e800" stroke-width="1.1" stroke-dasharray="4,1.5,1,1.5"/>
<line x1="332.8" y1="297.4" x2="332.8" y2="301.4" stroke="#ff0000" stroke-width="1.2"/>
</svg>
<svg class="abs" style="left:0;top:0" width="820" height="110" viewBox="0 0 820 110"><defs><linearGradient id="cg" x1="0" y1="0" x2="0" y2="1"><stop offset="0" stop-color="#e6e6f2"/><stop offset="1" stop-color="#c4c7d8"/></linearGradient></defs><g transform="translate(14,59)"><path d="M0.5 0.5H9.5L13.5 4.5V15.5H0.5Z" fill="#fff" stroke="#000"/><path d="M9.5 0.5V4.5H13.5" fill="none" stroke="#000"/></g><g transform="translate(36,59)"><path d="M0.5 0.5H9.5L13.5 4.5V15.5H0.5Z" fill="#fff" stroke="#000"/><path d="M9.5 0.5V4.5H13.5" fill="none" stroke="#000"/><path d="M1 7.5H5L6 6.5H7V8.5H14V15H1Z" fill="#ffff40" stroke="#000"/><path d="M1.5 9.5H13.5" stroke="#000" stroke-width="1"/></g><g transform="translate(58,59)"><path d="M0.5 0.5H9.5L13.5 4.5V15.5H0.5Z" fill="#fff" stroke="#000"/><path d="M9.5 0.5V4.5H13.5" fill="none" stroke="#000"/><rect x="1" y="6.5" width="13" height="9" fill="#000"/><rect x="2" y="8" width="2" height="2" fill="#9aa49a"/><rect x="2" y="11" width="2" height="2" fill="#fff"/><rect x="2" y="14" width="2" height="2" fill="#fff"/><rect x="5" y="8" width="2" height="2" fill="#9aa49a"/><rect x="5" y="11" width="2" height="2" fill="#fff"/><rect x="5" y="14" width="2" height="2" fill="#fff"/><rect x="8" y="8" width="2" height="2" fill="#9aa49a"/><rect x="8" y="11" width="2" height="2" fill="#fff"/><rect x="8" y="14" width="2" height="2" fill="#fff"/><rect x="11" y="8" width="2" height="2" fill="#9aa49a"/><rect x="11" y="11" width="2" height="2" fill="#fff"/><rect x="11" y="14" width="2" height="2" fill="#fff"/></g><g transform="translate(80,59)"><path d="M0.5 0.5H9.5L13.5 4.5V15.5H0.5Z" fill="#fff" stroke="#000"/><path d="M9.5 0.5V4.5H13.5" fill="none" stroke="#000"/><path d="M2.5 3V13.5H12" fill="none" stroke="#000" stroke-width="1.2"/><path d="M1.5 5H2.5M1.5 7H2.5M1.5 9H2.5M1.5 11H2.5M4 14.5V13.5M6 14.5V13.5M8 14.5V13.5M10 14.5V13.5" stroke="#000"/><path d="M3.5 11.5C4.5 9 4.5 6 6.5 6S8 9.5 9.5 9.5S11.5 7 11.5 6" fill="none" stroke="#f00000" stroke-width="1.3"/></g><g transform="translate(102,59)"><path d="M0.5 0.5H9.5L13.5 4.5V15.5H0.5Z" fill="#fff" stroke="#000"/><path d="M9.5 0.5V4.5H13.5" fill="none" stroke="#000"/><rect x="1" y="5" width="13" height="10.5" fill="#000"/><rect x="2" y="6" width="2" height="2" fill="#ffff00"/><rect x="2" y="9" width="2" height="2" fill="#ffff00"/><rect x="2" y="12" width="2" height="2" fill="#ffff00"/><rect x="5" y="6" width="2" height="2" fill="#ffff00"/><rect x="5" y="9" width="2" height="2" fill="#ffff00"/><rect x="5" y="12" width="2" height="2" fill="#ffff00"/><rect x="8" y="6" width="2" height="2" fill="#ffff00"/><rect x="8" y="9" width="2" height="2" fill="#ffff00"/><rect x="8" y="12" width="2" height="2" fill="#ffff00"/><rect x="11" y="6" width="2" height="2" fill="#ffff00"/><rect x="11" y="9" width="2" height="2" fill="#ffff00"/><rect x="11" y="12" width="2" height="2" fill="#ffff00"/></g><g transform="translate(122,59)"><circle cx="9.2" cy="6.9" r="6.2" fill="#48ecff" stroke="#3a5cff" stroke-width="1.1"/><path d="M3.5 4.5C6 6 12.5 6 15 4.5M3.5 9.3C6 8 12.5 8 15 9.3M9.2 0.8C6 3 6 11 9.2 13M9.2 0.8C12.4 3 12.4 11 9.2 13" fill="none" stroke="#5a5aff" stroke-width="1.1"/><path d="M0.5 15.3C2 15.3 2.7 14 3.1 11.5L3.9 8C4.3 6.5 5 6.2 6.5 6.5M1.8 9.3H5.6" fill="none" stroke="#000" stroke-width="1.9"/></g><path d="M142 65H147.5L144.75 68Z" fill="#000"/><g transform="translate(155,59)"><path d="M0.5 0.5H9.5L13.5 4.5V15.5H0.5Z" fill="#fff" stroke="#000"/><path d="M9.5 0.5V4.5H13.5" fill="none" stroke="#000"/><rect x="2" y="2" width="4" height="3.5" fill="#f00000"/><path d="M2 7.5H12" stroke="#a0a0a0" stroke-width="1"/><path d="M2 13L4.2 8.5L6.5 13Z" fill="#0000ff"/><path d="M8 9.5H12M8 11.5H9M11 11.5H12M8 13.5H9M11 13.5H12" stroke="#000" stroke-width="1"/></g><g transform="translate(177,59)"><path d="M0.5 0.5H9.5L13.5 4.5V15.5H0.5Z" fill="#fff" stroke="#000"/><path d="M9.5 0.5V4.5H13.5" fill="none" stroke="#000"/><path d="M4 8.5H13L10.5 13H1.5Z" fill="#40e8f0" stroke="#000" stroke-width="1"/><path d="M4 11H11" stroke="#000" stroke-width="0.8"/></g><g transform="translate(199,59)"><path d="M0.5 0.5H9.5L13.5 4.5V15.5H0.5Z" fill="#fff" stroke="#000"/><path d="M9.5 0.5V4.5H13.5" fill="none" stroke="#000"/><path d="M2 13L5 11M9 7.5L12 6" stroke="#f00000" stroke-width="1.5"/><path d="M7 6V12.5M3.5 9.5H10.5" stroke="#000" stroke-width="1"/><circle cx="7" cy="9.5" r="1.2" fill="#f00000"/></g><g transform="translate(221,59)"><path d="M0.5 0.5H9.5L13.5 4.5V15.5H0.5Z" fill="#fff" stroke="#000"/><path d="M9.5 0.5V4.5H13.5" fill="none" stroke="#000"/><path d="M4 4L5.5 6L7 4L8.5 6L10 4V8C10 10 8.5 10.5 7 10.5S4 10 4 8Z" fill="#f00000"/><path d="M7 10.5V14.5M7 14C5 14 3 12 2.5 10C4.5 10 6 11.5 7 13M7 14C9 14 11 12 11.5 10C9.5 10 8 11.5 7 13" fill="#10a010" stroke="#10a010" stroke-width="1"/></g><g transform="translate(251,59)"><path d="M0.5 6.5H6V5.5H9V8H3.5L0.5 12.5Z" fill="#ffff60" stroke="#000"/><path d="M0.5 12.5L3 8.5H14.5L12 12.5Z" fill="#808000" stroke="#000"/><path d="M8.5 3C10 0.5 13 0.5 14 3" fill="none" stroke="#000" stroke-width="1.1"/><path d="M12.5 2.5H15L14 4.5Z" fill="#000"/></g><g transform="translate(272,59)"><path d="M4 11.5C1 11.5 0.8 7 3.5 7C3.5 3 8 1.5 10 4C12.5 3.5 13.5 6 13 7C16 7 16 11.5 13 11.5Z" fill="#fff" stroke="#000" stroke-width="1.1"/><path d="M8 6V13" stroke="#f00000" stroke-width="2"/><path d="M4.5 12H11.5L8 16Z" fill="#f00000"/></g><g transform="translate(295,59)"><rect x="0.5" y="0.5" width="14" height="13" fill="#808000" stroke="#000"/><rect x="3" y="1" width="8.5" height="6" fill="#fff"/><rect x="11" y="2" width="1.5" height="2" fill="#000"/><rect x="3" y="9" width="8.5" height="4.5" fill="#000"/><rect x="8" y="10" width="2" height="2.5" fill="#fff"/></g><g transform="translate(317,59)"><rect x="0.5" y="0.5" width="12" height="13" fill="#808000" stroke="#000"/><rect x="2.5" y="1" width="7.5" height="5.5" fill="#fff"/><rect x="9.5" y="2" width="1.5" height="2" fill="#000"/><rect x="3.5" y="7.5" width="11" height="8" fill="#fff" stroke="#000"/><path d="M5 9.5V13.5H13M6.5 13V11.5H8V13H9.5V12H11" fill="none" stroke="#0000ff" stroke-width="1"/></g><g transform="translate(346,59)"><path d="M9.5 0.5C11 0.5 11.5 2 11 3C10 4 9 3.5 8.5 2.5C8.5 1.5 9 0.5 9.5 0.5Z M5 4L9 3.5L11 6.5L14 7.5L13.5 9L10 8.3L9 10L11.5 12.5L10 15.5L8.3 15L9 12.8L6 11L4.5 13L0.5 12.5L1 11L3.8 11.2L6 7L4.5 7.5L3 9.5L1.8 8.7L3.5 5.5Z" fill="#20e020" stroke="#000" stroke-width="0.8"/></g><g transform="translate(368,59)"><path d="M9.5 0.5C11 0.5 11.5 2 11 3C10 4 9 3.5 8.5 2.5C8.5 1.5 9 0.5 9.5 0.5Z M5 4L9 3.5L11 6.5L14 7.5L13.5 9L10 8.3L9 10L11.5 12.5L10 15.5L8.3 15L9 12.8L6 11L4.5 13L0.5 12.5L1 11L3.8 11.2L6 7L4.5 7.5L3 9.5L1.8 8.7L3.5 5.5Z" fill="#fff" stroke="#a0a0a0" stroke-width="0.8"/><circle cx="12" cy="12" r="4" fill="#ff1010"/><path d="M10.8 10V14M13.2 10V14" stroke="#fff" stroke-width="1.2"/></g><rect x="398" y="59" width="56" height="17" fill="#fff"/><rect x="441" y="60" width="12" height="15" fill="url(#cg)"/><path d="M444.5 66H449.5L447 69Z" fill="#000"/><text x="400.5" y="71.3" font-family="Liberation Sans" font-size="11.3" fill="#000">100%</text><g transform="translate(468,59)"><rect x="4" y="0.5" width="8" height="5" fill="#e8e8e8" stroke="#707070"/><path d="M1 5.5H15V11.5H1Z" fill="#b8b8c0" stroke="#707070"/><rect x="2" y="7" width="12" height="2" fill="#909098"/><rect x="10" y="7" width="3" height="1" fill="#40a0ff"/><rect x="4" y="10.5" width="8" height="4.5" fill="#fff" stroke="#707070"/><rect x="7" y="12" width="2" height="1.5" fill="#3070ff"/></g><g transform="translate(490,59)"><rect x="0" y="0.5" width="16" height="1.5" fill="#0000ff"/><rect x="1.5" y="1.5" width="13" height="9.5" fill="#fff" stroke="#0000ff"/><circle cx="5.5" cy="6" r="2.7" fill="#ff2020"/><path d="M5.5 6V3.3A2.7 2.7 0 0 1 8.2 6Z" fill="#20c020"/><path d="M5.5 6L3 7.2A2.7 2.7 0 0 0 5.5 8.7Z" fill="#a020f0"/><path d="M9.5 4H12.5M9.5 6H12.5M9.5 8H12.5" stroke="#008080" stroke-width="1"/><path d="M8 11V13.5M3 14.5H13" stroke="#000" stroke-width="1.3"/></g><g transform="translate(512,59)"><rect x="0.5" y="0.5" width="15" height="15" fill="#ff00ff" stroke="#a000a0"/><rect x="2" y="2" width="12" height="12" fill="#fff"/><rect x="3" y="3" width="10" height="1" fill="#ff00ff"/><circle cx="6.5" cy="8.5" r="3.5" fill="#ff00ff" stroke="#a000a0" stroke-width="0.6"/><path d="M12 6.5V7M12 8.5V9M12 10.5V11" stroke="#a000a0"/></g><g transform="translate(534,59)"><rect x="0.5" y="1" width="15" height="14.5" fill="none" stroke="#000" stroke-width="1.3"/><rect x="1" y="1.5" width="14" height="3" fill="#000"/><rect x="1.5" y="2.2" width="1.8" height="1.6" fill="#fff"/><rect x="4" y="2.2" width="7" height="1.6" fill="#0000ff"/><path d="M15 0L13.5 5L8 12L4 14L6 10.5L11.5 5Z" fill="#000"/><path d="M11 6.5L6.5 12" stroke="#20f0f0" stroke-width="1.2"/><path d="M12 2.5L13 3.5" stroke="#fff" stroke-width="0.8"/></g><g transform="translate(556,59)"><rect x="0.5" y="0.5" width="15" height="6" fill="#fff" stroke="#000"/><rect x="1" y="1" width="14" height="2" fill="#0000ff"/><rect x="0.5" y="9.5" width="15" height="6" fill="#fff" stroke="#000"/><rect x="1" y="10" width="14" height="2" fill="#0000ff"/></g><g transform="translate(578,59)"><rect x="0.5" y="0.5" width="15" height="5" fill="#fff" stroke="#000"/><rect x="1" y="1" width="14" height="1" fill="#0000ff"/><path d="M1.5 3.5C3 2 4 4.5 6 3.5S9 2 11 3.5S13 2.5 14.5 3" fill="none" stroke="#ff2020" stroke-width="0.9"/><rect x="0.5" y="7.5" width="9" height="5" fill="#fff" stroke="#000"/><rect x="1" y="8" width="8" height="1" fill="#0000ff"/><rect x="3.5" y="9.5" width="12" height="6" fill="#fff" stroke="#000"/><rect x="4" y="10" width="11" height="1" fill="#0000ff"/><path d="M6 11.5L9.5 14.5L13 11.5" fill="none" stroke="#000" stroke-width="0.8"/></g><g transform="translate(608,59)"><rect x="5.5" y="0.5" width="5" height="3" fill="#ffff00" stroke="#000"/><path d="M8 3.5V5M4 9.5H2.5V12M12 9.5H13.5V12" stroke="#000" fill="none"/><path d="M8 4.5L11.5 8L8 11.5L4.5 8Z" fill="#40d8e8" stroke="#000" stroke-width="0.8"/><rect x="0.5" y="12" width="5" height="3.5" fill="#ffff00" stroke="#000"/><rect x="10.5" y="12" width="5" height="3.5" fill="#ffff00" stroke="#000"/></g><g transform="translate(638,59)"><rect x="0" y="1" width="13" height="13" fill="#ffff60"/><path d="M14.5 3V14.5H0" fill="none" stroke="#000" stroke-width="1"/><circle cx="6.5" cy="7" r="3.8" fill="#80f0ff" stroke="#000" stroke-width="1.2"/><path d="M9 9.5L14 15" stroke="#0000a0" stroke-width="1.6"/></g><g transform="translate(660,59)"><rect x="0" y="1" width="13" height="13" fill="#fff"/><path d="M1.5 2V13.5H13" fill="none" stroke="#000" stroke-width="1"/><path d="M0.5 4H1.5M0.5 6H1.5M0.5 8H1.5M0.5 10H1.5M0.5 12H1.5" stroke="#000"/><path d="M3 10C3 6 4 3 6 3S8 5 8.5 5M11 2V4" fill="none" stroke="#f00000" stroke-width="1"/><circle cx="8" cy="8.5" r="3.5" fill="#80f0ff" stroke="#000" stroke-width="1.2"/><path d="M10.5 11L14.5 15" stroke="#0000a0" stroke-width="1.6"/></g><g transform="translate(682,59)"><rect x="0.5" y="0.5" width="15" height="13" fill="#fff" stroke="#000"/><rect x="1" y="1" width="14" height="2" fill="#0000ff"/><rect x="2" y="5" width="4" height="1.6" fill="#000"/><rect x="7" y="5" width="3" height="1.6" fill="#000"/><rect x="11" y="5" width="3" height="1.6" fill="#000"/><rect x="2" y="8" width="4" height="1.6" fill="#000"/><rect x="7" y="8" width="3" height="1.6" fill="#000"/><rect x="11" y="8" width="3" height="1.6" fill="#000"/><rect x="2" y="10.8" width="4" height="1.6" fill="#000"/><rect x="7" y="10.8" width="3" height="1.6" fill="#000"/><rect x="11" y="10.8" width="3" height="1.6" fill="#000"/></g><g transform="translate(704,59)"><rect x="0.5" y="0.5" width="15" height="15" fill="#fff" stroke="#000"/><rect x="1" y="1" width="14" height="2" fill="#0000ff"/><path d="M2.5 5.5H5M2.5 8.5H6M2.5 11.5H5" stroke="#000" stroke-width="1"/><path d="M14 4L8.5 13L7.5 14.5L8 12.5L13 4Z" fill="#ffff00" stroke="#000" stroke-width="0.8"/><path d="M13 3.5L14.5 2L15 4Z" fill="#f00000"/></g><path d="M742.5 60L745 61.5L742.5 63ZM745 60L747.5 61.5L745 63Z" fill="#000"/><path d="M783.5 60L786 61.5L783.5 63ZM786 60L788.5 61.5L786 63Z" fill="#000"/><path d="M742.5 86L745 87.5L742.5 89ZM745 86L747.5 87.5L745 89Z" fill="#000"/><path d="M783.5 86L786 87.5L783.5 89ZM786 86L788.5 87.5L786 89Z" fill="#000"/><path d="M742.5 70.5H747.5" stroke="#000" stroke-width="1"/><path d="M742 72.5H748L745 75.5Z" fill="#000"/><path d="M783.5 70.5H788.5" stroke="#000" stroke-width="1"/><path d="M783 72.5H789L786 75.5Z" fill="#000"/><path d="M81.5 96.5H86.5" stroke="#000" stroke-width="1"/><path d="M81 98.5H87L84 101.5Z" fill="#000"/><path d="M304.5 96.5H309.5" stroke="#000" stroke-width="1"/><path d="M304 98.5H310L307 101.5Z" fill="#000"/><path d="M742.5 96.5H747.5" stroke="#000" stroke-width="1"/><path d="M742 98.5H748L745 101.5Z" fill="#000"/><path d="M783.5 96.5H788.5" stroke="#000" stroke-width="1"/><path d="M783 98.5H789L786 101.5Z" fill="#000"/><path d="M243.5 59V77" stroke="#b8b8c8" stroke-opacity="0.75"/><path d="M244.5 60V78" stroke="#fff" stroke-opacity="0.5"/><path d="M339.5 59V77" stroke="#b8b8c8" stroke-opacity="0.75"/><path d="M340.5 60V78" stroke="#fff" stroke-opacity="0.5"/><path d="M391.5 59V77" stroke="#b8b8c8" stroke-opacity="0.75"/><path d="M392.5 60V78" stroke="#fff" stroke-opacity="0.5"/><path d="M462.5 59V77" stroke="#b8b8c8" stroke-opacity="0.75"/><path d="M463.5 60V78" stroke="#fff" stroke-opacity="0.5"/><path d="M602.5 59V77" stroke="#b8b8c8" stroke-opacity="0.75"/><path d="M603.5 60V78" stroke="#fff" stroke-opacity="0.5"/><path d="M631.5 59V77" stroke="#b8b8c8" stroke-opacity="0.75"/><path d="M632.5 60V78" stroke="#fff" stroke-opacity="0.5"/><path d="M728.5 59V77" stroke="#b8b8c8" stroke-opacity="0.75"/><path d="M729.5 60V78" stroke="#fff" stroke-opacity="0.5"/></svg>
<svg class="abs" style="left:0;top:0" width="820" height="110" viewBox="0 0 820 110"><g transform="translate(17,85)"><path d="M2 0.5L6 8M8 0.5L4 8" stroke="#9a9aa8" stroke-width="1.4" fill="none"/><circle cx="2.5" cy="11" r="2.4" fill="none" stroke="#9a9aa8" stroke-width="1.3"/><circle cx="7.5" cy="11" r="2.4" fill="none" stroke="#9a9aa8" stroke-width="1.3"/></g><g transform="translate(35,86)"><path d="M0.5 0.5H5.5L7.5 2.5V9.5H0.5Z" fill="#f4f4f8" stroke="#a0a0b0"/><path d="M5.5 3.5H10.5L13.5 6.5V12.5H5.5Z" fill="#f4f4f8" stroke="#a0a0b0"/><path d="M2 3H5M2 5H5M2 7H5M7 6H10M7 8H12M7 10H12" stroke="#a8a8b8" stroke-width="0.8"/></g><g transform="translate(57,85)"><rect x="0.5" y="2.5" width="11" height="11" fill="#b8b8c4" stroke="#9898a8"/><rect x="3.5" y="0.5" width="5" height="3" fill="#d0d0da" stroke="#9898a8"/><path d="M6.5 6.5H12.5L15.5 9.5V14.5H6.5Z" fill="#f0f0f4" stroke="#9898a8"/><path d="M8 10H13M8 12H13" stroke="#a0a0b0" stroke-width="0.8"/></g><g transform="translate(101,85)"><path d="M1 10L6 3" stroke="#000" stroke-width="2.4"/><path d="M2 9L5 4.5" stroke="#fff" stroke-width="0.7" stroke-dasharray="1,1"/><path d="M6 0.5V2M3 2L4 3M9 2L8 3M8.5 5.5H10M3.5 5.5H2M7 8V9" stroke="#ffff30" stroke-width="1.2"/><path d="M9.5 2H15V5" fill="none" stroke="#f00000" stroke-width="1.3"/><path d="M12.5 4.5H17L14.75 7Z" fill="#f00000"/><rect x="4" y="8.5" width="13" height="7.5" fill="#000"/><rect x="5.00" y="9.50" width="2.00" height="0.97" fill="#8a948a"/><rect x="5.00" y="11.67" width="2.00" height="0.97" fill="#fff"/><rect x="5.00" y="13.83" width="2.00" height="0.97" fill="#fff"/><rect x="8.00" y="9.50" width="2.00" height="0.97" fill="#8a948a"/><rect x="8.00" y="11.67" width="2.00" height="0.97" fill="#fff"/><rect x="8.00" y="13.83" width="2.00" height="0.97" fill="#fff"/><rect x="11.00" y="9.50" width="2.00" height="0.97" fill="#8a948a"/><rect x="11.00" y="11.67" width="2.00" height="0.97" fill="#fff"/><rect x="11.00" y="13.83" width="2.00" height="0.97" fill="#fff"/><rect x="14.00" y="9.50" width="2.00" height="0.97" fill="#8a948a"/><rect x="14.00" y="11.67" width="2.00" height="0.97" fill="#fff"/><rect x="14.00" y="13.83" width="2.00" height="0.97" fill="#fff"/></g><g transform="translate(124,85)"><text x="-0.5" y="5.3" font-family="Liberation Sans" font-weight="bold" font-size="6.8" letter-spacing="-0.3" fill="#000">123</text><path d="M9 2H15V5" fill="none" stroke="#f00000" stroke-width="1.3"/><path d="M12.5 4.5H17L14.75 7Z" fill="#f00000"/><rect x="3" y="8" width="13" height="7" fill="#000"/><rect x="4.00" y="9.00" width="2.00" height="0.90" fill="#8a948a"/><rect x="4.00" y="11.00" width="2.00" height="0.90" fill="#fff"/><rect x="4.00" y="13.00" width="2.00" height="0.90" fill="#fff"/><rect x="7.00" y="9.00" width="2.00" height="0.90" fill="#8a948a"/><rect x="7.00" y="11.00" width="2.00" height="0.90" fill="#fff"/><rect x="7.00" y="13.00" width="2.00" height="0.90" fill="#fff"/><rect x="10.00" y="9.00" width="2.00" height="0.90" fill="#8a948a"/><rect x="10.00" y="11.00" width="2.00" height="0.90" fill="#fff"/><rect x="10.00" y="13.00" width="2.00" height="0.90" fill="#fff"/><rect x="13.00" y="9.00" width="2.00" height="0.90" fill="#8a948a"/><rect x="13.00" y="11.00" width="2.00" height="0.90" fill="#fff"/><rect x="13.00" y="13.00" width="2.00" height="0.90" fill="#fff"/></g><g transform="translate(154,85)"><path d="M1 4.5C2.5 1.5 6 0.5 8.5 2.5" fill="none" stroke="#5a6472" stroke-width="2" opacity="0.85"/><path d="M0 3L3.5 6.5L4 2Z" fill="#5a6472" opacity="0.85"/><path d="M11 3.5C9.5 6.5 6 7.5 3.5 5.5" fill="none" stroke="#5a6472" stroke-width="2" opacity="0.85"/><path d="M12 5L8.5 1.5L8 6Z" fill="#5a6472" opacity="0.85"/><path d="M14 3V8" stroke="#9090a8" stroke-width="1"/><path d="M12 7H16L14 9Z" fill="#9090a8"/><rect x="3" y="9" width="13" height="6.5" fill="#5a6472"/><rect x="4.00" y="10.00" width="3.00" height="0.90" fill="#a8a8a0"/><rect x="4.00" y="11.83" width="3.00" height="0.90" fill="#fff"/><rect x="4.00" y="13.67" width="3.00" height="0.90" fill="#fff"/><rect x="8.00" y="10.00" width="3.00" height="0.90" fill="#a8a8a0"/><rect x="8.00" y="11.83" width="3.00" height="0.90" fill="#fff"/><rect x="8.00" y="13.67" width="3.00" height="0.90" fill="#fff"/><rect x="12.00" y="10.00" width="3.00" height="0.90" fill="#a8a8a0"/><rect x="12.00" y="11.83" width="3.00" height="0.90" fill="#fff"/><rect x="12.00" y="13.67" width="3.00" height="0.90" fill="#fff"/></g><g transform="translate(176,85)"><rect x="0" y="0" width="9" height="6.5" fill="#5a6472"/><rect x="1.00" y="1.00" width="3.00" height="0.90" fill="#a0a0b8"/><rect x="1.00" y="2.83" width="3.00" height="0.90" fill="#fff"/><rect x="1.00" y="4.67" width="3.00" height="0.90" fill="#fff"/><rect x="5.00" y="1.00" width="3.00" height="0.90" fill="#a0a0b8"/><rect x="5.00" y="2.83" width="3.00" height="0.90" fill="#fff"/><rect x="5.00" y="4.67" width="3.00" height="0.90" fill="#fff"/><path d="M10 2.5H14V7" fill="none" stroke="#9898b0" stroke-width="1"/><path d="M12 6.5H16L14 9Z" fill="#9898b0"/><rect x="7" y="9" width="9" height="6.5" fill="#5a6472"/><rect x="8.00" y="10.00" width="3.00" height="0.90" fill="#a8a8a0"/><rect x="8.00" y="11.83" width="3.00" height="0.90" fill="#fff"/><rect x="8.00" y="13.67" width="3.00" height="0.90" fill="#fff"/><rect x="12.00" y="10.00" width="3.00" height="0.90" fill="#a8a8a0"/><rect x="12.00" y="11.83" width="3.00" height="0.90" fill="#fff"/><rect x="12.00" y="13.67" width="3.00" height="0.90" fill="#fff"/></g><g transform="translate(206,85)"><rect x="0.5" y="0.5" width="5" height="8" rx="1" fill="#fff" stroke="#000"/><rect x="2.5" y="2.5" width="5" height="8" rx="1" fill="#fff" stroke="#000"/><rect x="4.5" y="4.5" width="5" height="8" rx="1" fill="#fff" stroke="#000"/><path d="M10 2.5C12 2.5 13 3.5 13 5.5" fill="none" stroke="#f00000" stroke-width="1.3"/><path d="M10.5 5H15.5L13 7.5Z" fill="#f00000"/><rect x="6" y="9" width="10" height="7" fill="#000"/><rect x="7.00" y="10.00" width="2.00" height="0.90" fill="#8a948a"/><rect x="7.00" y="12.00" width="2.00" height="0.90" fill="#fff"/><rect x="7.00" y="14.00" width="2.00" height="0.90" fill="#fff"/><rect x="10.00" y="10.00" width="2.00" height="0.90" fill="#8a948a"/><rect x="10.00" y="12.00" width="2.00" height="0.90" fill="#fff"/><rect x="10.00" y="14.00" width="2.00" height="0.90" fill="#fff"/><rect x="13.00" y="10.00" width="2.00" height="0.90" fill="#8a948a"/><rect x="13.00" y="12.00" width="2.00" height="0.90" fill="#fff"/><rect x="13.00" y="14.00" width="2.00" height="0.90" fill="#fff"/></g><g transform="translate(236,85)"><rect x="0" y="4" width="9.5" height="7" fill="#008000"/><path d="M0.5 6.3H7" stroke="#80c080" stroke-width="0.8"/><path d="M8.5 0V5" stroke="#f00000" stroke-width="1.3"/><path d="M6 4H11L8.5 6.5Z" fill="#f00000"/><path d="M9.5 9.5H15.5V13.5H13" fill="none" stroke="#000" stroke-width="1.2"/><rect x="9.5" y="11" width="4" height="4.5" fill="#000"/><path d="M7 12H10M7 14.5H10" stroke="#000" stroke-width="1"/></g><g transform="translate(257,85)"><path d="M1 0.5H14.5V3" fill="none" stroke="#a0a0b8"/><path d="M3.5 4.5L9.5 4.5L12.5 7.5V12.5L9.5 15.5H3.5L0.5 12.5V7.5Z" fill="#9a9cb0" stroke="#5a6472" stroke-width="1.1"/><path d="M3.5 7.5L6.5 10.5L9.5 7.5M6.5 10.5V14" stroke="#6a7468" stroke-width="2.4" fill="none"/><rect x="12" y="3" width="4" height="2.5" fill="#a0a0c0"/><path d="M13 5V7.5M15 5V7.5" stroke="#9090b0" stroke-width="1"/></g><g transform="translate(280,85)"><path d="M0.5 3.5H4.5V13.5H0.5Z" fill="#fff" stroke="#5a6472"/><path d="M3 4.5H7L7.5 5V14.5H3Z" fill="#fff" stroke="#5a6472"/><path d="M6.5 6.5H10L12.5 9V15.5H6.5Z" fill="#fff" stroke="#5a6472"/><path d="M1 0.5H13.5V3" fill="none" stroke="#a0a0b8"/><rect x="11" y="3" width="4" height="2.5" fill="#a0a0c0"/><path d="M12 5V7M14 5V7" stroke="#9090b0" stroke-width="1"/></g><rect x="324.5" y="84.5" width="125" height="19" fill="#fff" stroke="#a8a8b4"/><path d="M434.5 87V101" stroke="#dcdce8"/><path d="M439.5 93H445.5L442.5 96Z" fill="#606060"/><text x="331" y="98.5" font-family="Liberation Serif" font-weight="bold" font-size="10" fill="#606060">T</text><text x="336" y="101" font-family="Liberation Serif" font-weight="bold" font-size="10" fill="#000">T</text><text x="350" y="98.3" font-family="Liberation Sans" font-size="11.6" fill="#707080">Default: Arial</text><rect x="454.5" y="84.5" width="57" height="18" fill="#fbfbfd" stroke="#a8a8b4"/><text x="456.5" y="98.3" font-family="Liberation Sans" font-size="11.6" fill="#8a8aa0">0</text><path d="M501.5 93H507.5L504.5 96Z" fill="#606060"/><text x="519.5" y="98.3" font-family="Liberation Serif" font-weight="bold" font-size="15" transform="translate(519.5 98.3) scale(1.1 1) translate(-519.5 -98.3)" fill="#585868">B</text><text x="541" y="98.3" font-family="Liberation Serif" font-weight="bold" font-style="italic" font-size="15" fill="#585868" stroke="#585868" stroke-width="0.6">I</text><text x="563.5" y="98" font-family="Liberation Serif" font-size="14" fill="#585868">U</text><path d="M564 99.5H575" stroke="#585868" stroke-width="1"/><text x="585.5" y="98" font-family="Liberation Serif" font-weight="bold" font-size="11" fill="#585868">x</text><text x="592" y="92" font-family="Liberation Serif" font-size="8" fill="#585868">2</text><text x="607.5" y="96" font-family="Liberation Serif" font-weight="bold" font-size="11" fill="#585868">x</text><text x="614" y="100" font-family="Liberation Serif" font-size="8" fill="#9898a8">2</text><text x="629.5" y="96" font-family="Liberation Serif" font-weight="bold" font-size="11" fill="#585868">x</text><text x="636" y="91.5" font-family="Liberation Serif" font-size="7.5" fill="#585868">2</text><text x="636" y="100" font-family="Liberation Serif" font-size="7.5" fill="#9898a8">1</text><text x="648.5" y="98.5" font-family="Liberation Serif" font-size="15.5" fill="#585868" stroke="#585868" stroke-width="0.4">&#945;&#946;</text><text x="671" y="100" font-family="Liberation Serif" font-size="19" fill="#585868" stroke="#585868" stroke-width="0.5">A</text><path d="M681.5 89L684 86.5L686.5 89Z" fill="#000"/><text x="696" y="97.5" font-family="Liberation Serif" font-size="13" fill="#585868" stroke="#585868" stroke-width="0.3">A</text><path d="M704 86.5H709L706.5 89Z" fill="#000"/><path d="M147.5 85V103" stroke="#b8b8c8" stroke-opacity="0.75"/><path d="M148.5 86V104" stroke="#fff" stroke-opacity="0.5"/><path d="M199.5 85V103" stroke="#b8b8c8" stroke-opacity="0.75"/><path d="M200.5 86V104" stroke="#fff" stroke-opacity="0.5"/><path d="M229.5 85V103" stroke="#b8b8c8" stroke-opacity="0.75"/><path d="M230.5 86V104" stroke="#fff" stroke-opacity="0.5"/></svg>
<svg class="abs" style="left:0;top:0" width="820" height="440" viewBox="0 0 820 440"><path d="M26 111.5H50" stroke="#9a9aaa" stroke-dasharray="2,2" stroke-width="2"/><rect x="23.5" y="116.5" width="21" height="21" fill="#e4e4f2" stroke="#3080ff"/><path d="M28.5 119V132L31.5 129L34 134L36 133L33.5 128H37.5Z" fill="#fff" stroke="#000" stroke-width="1"/><circle cx="32" cy="146.5" r="3.8" fill="#fff" stroke="#000" stroke-width="1.2"/><path d="M30 146.5H34M32 144.5V148.5" stroke="#000"/><path d="M34.8 149.3L39.5 154" stroke="#000" stroke-width="2"/><path d="M28.5 153V156.5H36V153" fill="none" stroke="#000" stroke-width="0.9"/><circle cx="32" cy="168.5" r="3.8" fill="#fff" stroke="#9aa0a8" stroke-width="1.2"/><path d="M30 168.5H34" stroke="#9aa0a8"/><path d="M34.8 171.3L39.5 176" stroke="#9aa0a8" stroke-width="2"/><path d="M28.5 175V178.5H36V175" fill="none" stroke="#9aa0a8" stroke-width="0.9"/><path d="M33.5 186V199M27.5 192.5H39.5" stroke="#000" stroke-width="1.2"/><rect x="31" y="190" width="5" height="5" fill="none" stroke="#000" stroke-width="1"/><circle cx="33" cy="214.5" r="5.5" fill="none" stroke="#000" stroke-width="1.1"/><path d="M33 207V210M33 219V222M25.5 214.5H28.5M37.5 214.5H40.5" stroke="#000" stroke-width="1.1"/><circle cx="33" cy="214.5" r="0.9" fill="#000"/><path d="M33 228V233M33 239V244" stroke="#000" stroke-width="1.4"/><path d="M29.5 232H36.5L33 236Z M29.5 240H36.5L33 236.5Z" fill="#000"/><path d="M29 248V254" stroke="#000" stroke-width="1.4"/><path d="M25.5 252.5H32.5L29 257Z" fill="#000"/><ellipse cx="34" cy="260.5" rx="6.5" ry="3.5" fill="#10d0a0" stroke="#006060" stroke-width="0.8" transform="rotate(-15 34 260.5)"/><path d="M26 265L40 253" stroke="#f00000" stroke-width="1"/><path d="M28 265L42 255" stroke="#0000ff" stroke-width="1"/><path d="M29 270V276" stroke="#000" stroke-width="1.4"/><path d="M25.5 274.5H32.5L29 279Z" fill="#000"/><path d="M31.5 280.5H34M31 283V285.5H38M35.5 281H38" stroke="#000" stroke-width="1"/><path d="M25 288L41 276" stroke="#0000ff" stroke-width="1"/><rect x="32" y="298" width="2" height="2" fill="#000"/><rect x="29" y="302" width="2" height="2" fill="#000"/><rect x="37" y="301" width="2" height="2" fill="#000"/><rect x="33" y="306" width="2" height="2" fill="#000"/><rect x="36.5" y="304.5" width="1.5" height="1.5" fill="#000"/><text x="27.5" y="329.5" font-family="Liberation Serif" font-weight="bold" font-size="15" fill="#000">T</text><rect x="26.5" y="343.5" width="11" height="11" fill="#fff" stroke="#000"/><path d="M32 344V354M27 349H37" stroke="#000"/><rect x="28.5" y="345.5" width="2" height="2" fill="#000"/><rect x="33.5" y="345.5" width="2" height="2" fill="#000"/><rect x="28.5" y="350.5" width="2" height="2" fill="#000"/><rect x="33.5" y="350.5" width="2" height="2" fill="#000"/><text x="37.5" y="345" font-family="Liberation Sans" font-size="7" fill="#ff0000">A</text><path d="M27 374L37 364" stroke="#000" stroke-width="1.6"/><path d="M38.5 362.5L38.5 368.5L32.5 362.5Z" fill="#000"/><path d="M26.5 397L38.5 384" stroke="#000" stroke-width="1.5"/><path d="M45 213.5H51L48 216.5Z" fill="#000"/><path d="M45 256.5H51L48 259.5Z" fill="#000"/><path d="M45 278.5H51L48 281.5Z" fill="#000"/><path d="M45 344.5H51L48 347.5Z" fill="#000"/><path d="M45 366.5H51L48 369.5Z" fill="#000"/><path d="M45 388.5H51L48 391.5Z" fill="#000"/><rect x="22" y="418" width="35" height="12" fill="#c8cadb" opacity="0.5"/><path d="M26.5 422.5H30L28.25 424.5ZM26.5 425.5H30L28.25 427.5Z" fill="#000"/><path d="M46 421.5V427" stroke="#000" stroke-width="1.2"/><path d="M48 421.5L51.5 424.25L48 427Z" fill="#000"/><path d="M27 434.5H50" stroke="#9a9aaa" stroke-dasharray="2,2" stroke-width="2"/></svg>
</body></html>
